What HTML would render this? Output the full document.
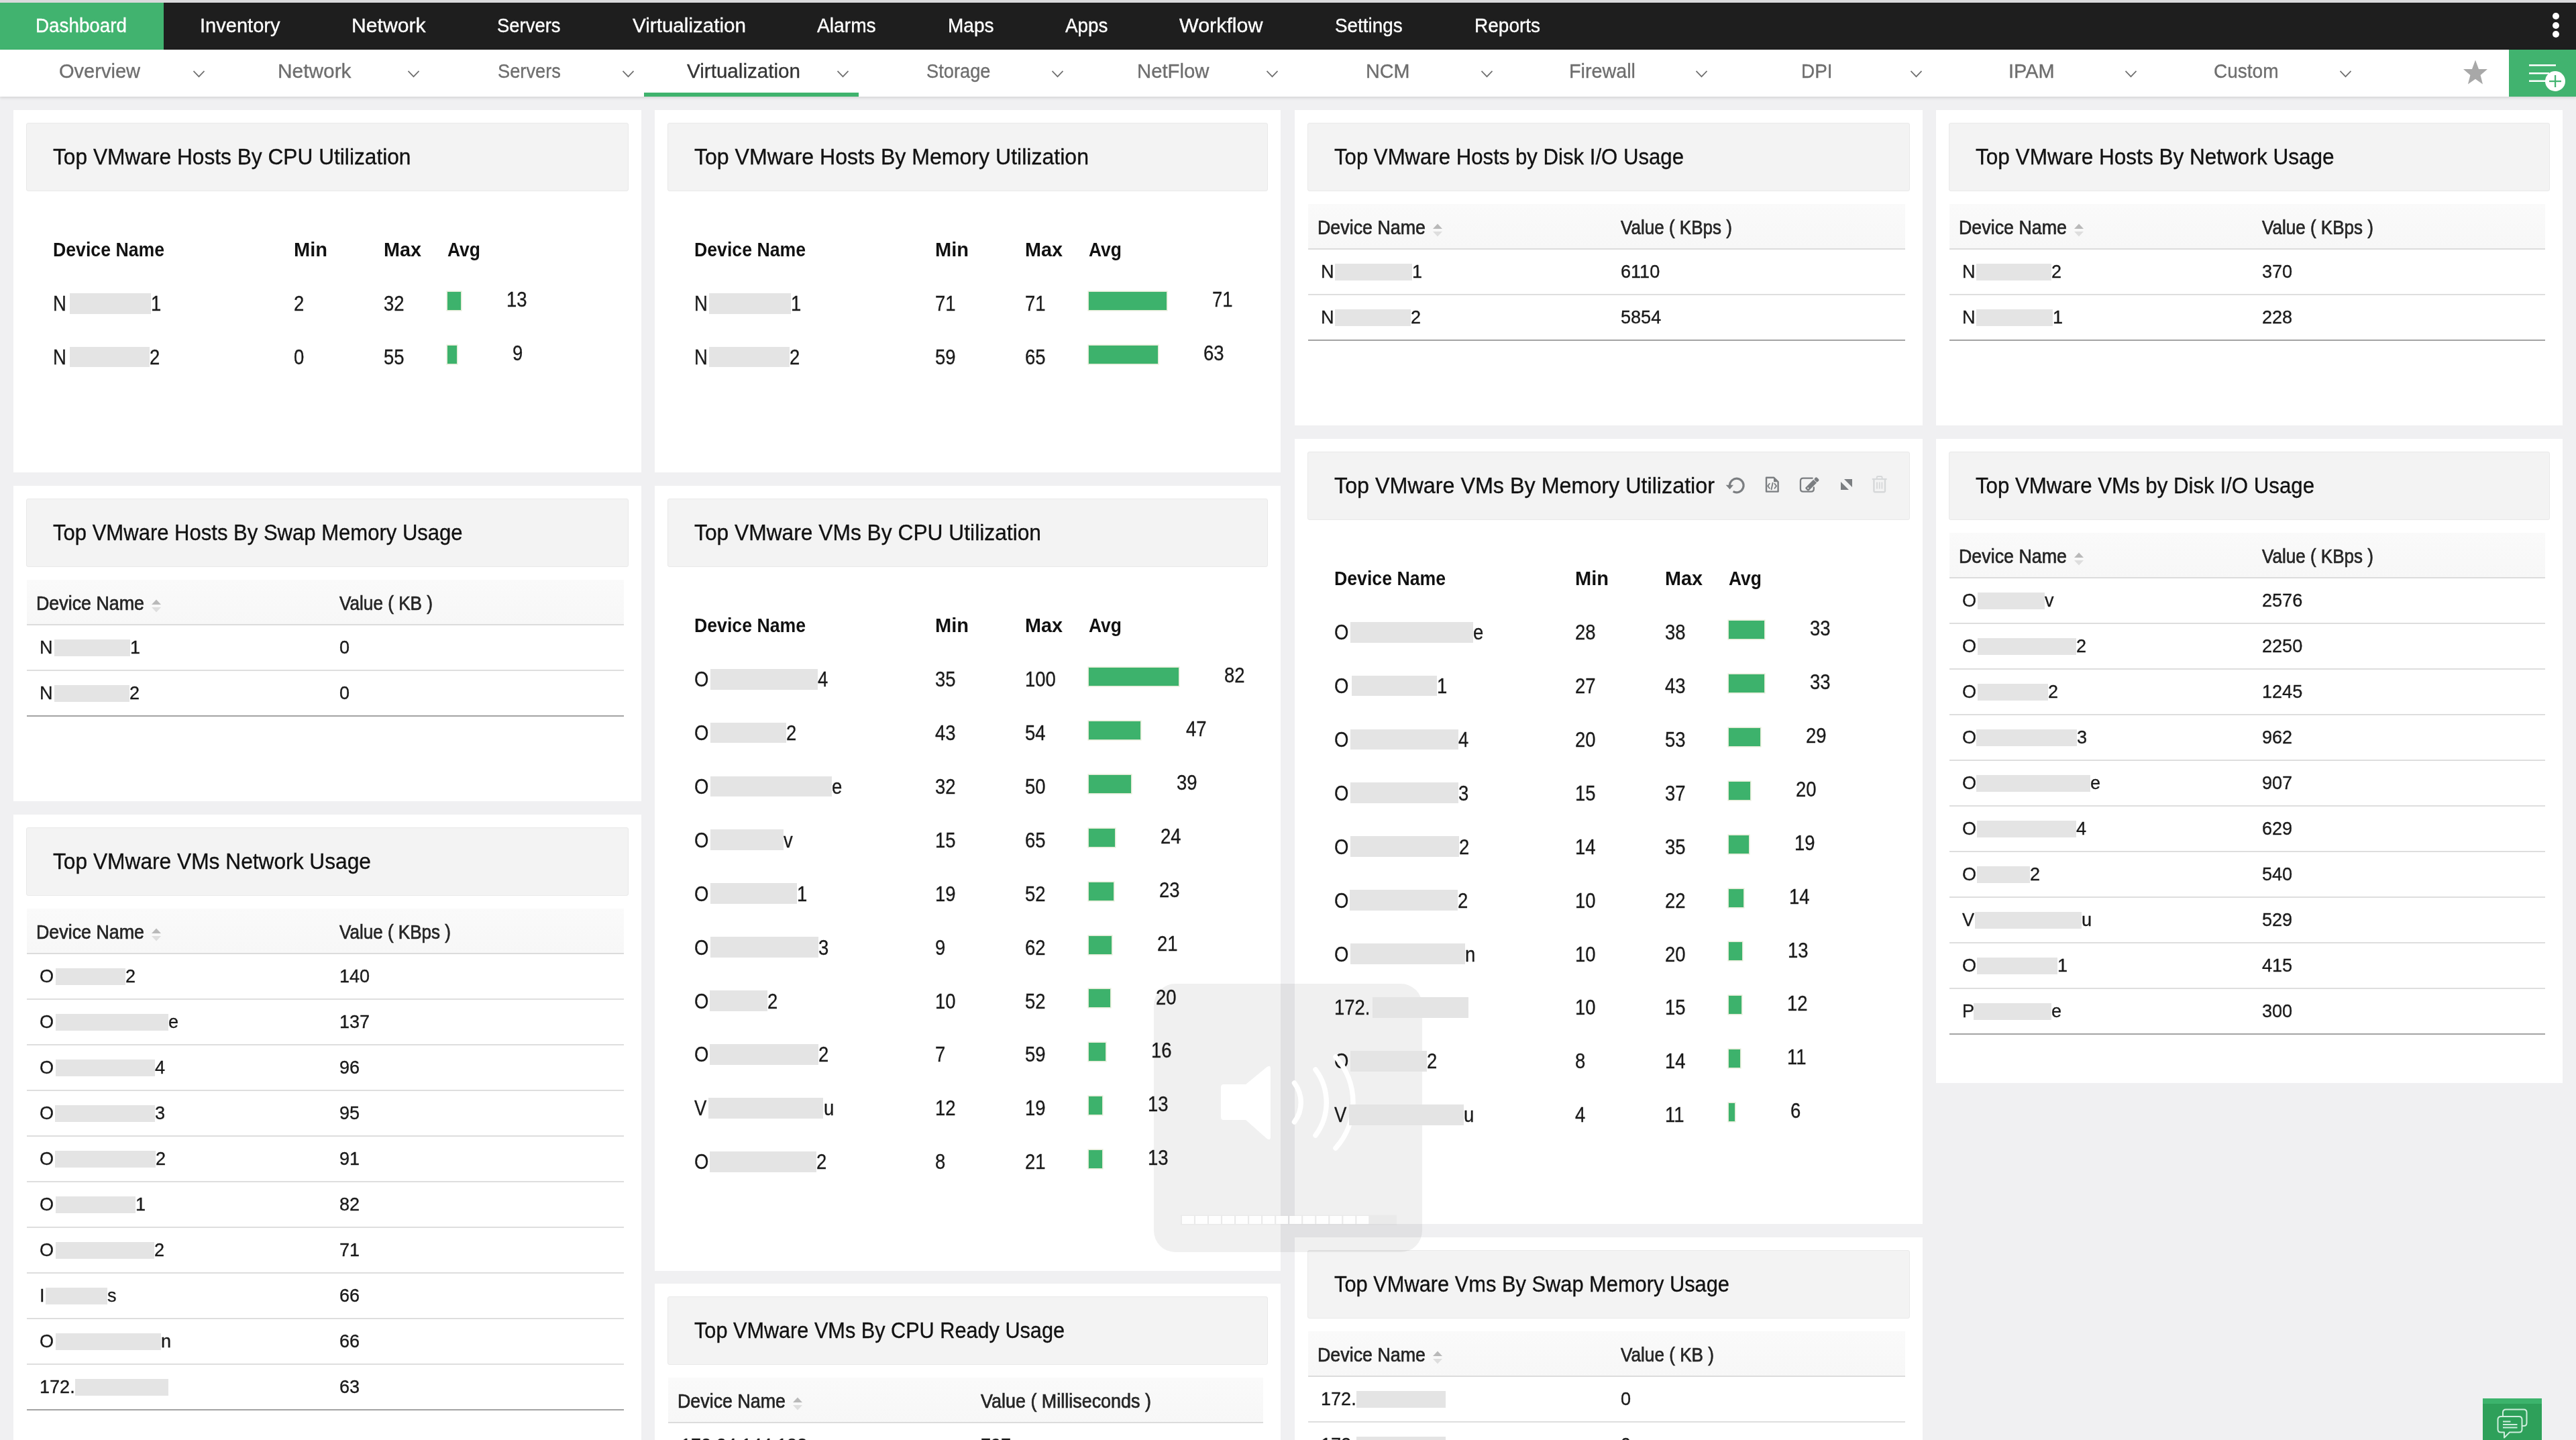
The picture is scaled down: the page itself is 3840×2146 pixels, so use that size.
<!DOCTYPE html>
<html><head><meta charset="utf-8"><title>Dashboard</title>
<style>
html,body{margin:0;padding:0;}
body{width:3840px;height:2146px;overflow:hidden;position:relative;background:#f0f0f2;font-family:'Liberation Sans',sans-serif;}
.t{position:absolute;white-space:nowrap;}
.r{position:absolute;}
</style></head><body>
<div class="r" style="left:0.0px;top:0.0px;width:3840.0px;height:4.0px;background:#dadadc;"></div>
<div class="r" style="left:0.0px;top:4.0px;width:3840.0px;height:70.0px;background:#1e1e1e;"></div>
<div class="r" style="left:0.0px;top:4.0px;width:244.0px;height:70.0px;background:#41b36f;"></div>
<div class="t" style="left:53.2px;top:23.2px;font-size:29.5px;line-height:29.5px;color:#ffffff;font-weight:400;transform:scaleX(0.9424);transform-origin:0 0;-webkit-text-stroke:0.35px #ffffff;">Dashboard</div>
<div class="t" style="left:297.8px;top:23.2px;font-size:29.5px;line-height:29.5px;color:#ffffff;font-weight:400;transform:scaleX(0.9848);transform-origin:0 0;-webkit-text-stroke:0.35px #ffffff;">Inventory</div>
<div class="t" style="left:524.2px;top:23.2px;font-size:29.5px;line-height:29.5px;color:#ffffff;font-weight:400;transform:scaleX(1.0213);transform-origin:0 0;-webkit-text-stroke:0.35px #ffffff;">Network</div>
<div class="t" style="left:741.2px;top:23.2px;font-size:29.5px;line-height:29.5px;color:#ffffff;font-weight:400;transform:scaleX(0.9298);transform-origin:0 0;-webkit-text-stroke:0.35px #ffffff;">Servers</div>
<div class="t" style="left:942.8px;top:23.2px;font-size:29.5px;line-height:29.5px;color:#ffffff;font-weight:400;transform:scaleX(1.0038);transform-origin:0 0;-webkit-text-stroke:0.35px #ffffff;">Virtualization</div>
<div class="t" style="left:1217.8px;top:23.2px;font-size:29.5px;line-height:29.5px;color:#ffffff;font-weight:400;transform:scaleX(0.9555);transform-origin:0 0;-webkit-text-stroke:0.35px #ffffff;">Alarms</div>
<div class="t" style="left:1413.2px;top:23.2px;font-size:29.5px;line-height:29.5px;color:#ffffff;font-weight:400;transform:scaleX(0.9496);transform-origin:0 0;-webkit-text-stroke:0.35px #ffffff;">Maps</div>
<div class="t" style="left:1588.2px;top:23.2px;font-size:29.5px;line-height:29.5px;color:#ffffff;font-weight:400;transform:scaleX(0.9444);transform-origin:0 0;-webkit-text-stroke:0.35px #ffffff;">Apps</div>
<div class="t" style="left:1758.2px;top:23.2px;font-size:29.5px;line-height:29.5px;color:#ffffff;font-weight:400;transform:scaleX(1.0310);transform-origin:0 0;-webkit-text-stroke:0.35px #ffffff;">Workflow</div>
<div class="t" style="left:1989.8px;top:23.2px;font-size:29.5px;line-height:29.5px;color:#ffffff;font-weight:400;transform:scaleX(0.9447);transform-origin:0 0;-webkit-text-stroke:0.35px #ffffff;">Settings</div>
<div class="t" style="left:2198.2px;top:23.2px;font-size:29.5px;line-height:29.5px;color:#ffffff;font-weight:400;transform:scaleX(0.9497);transform-origin:0 0;-webkit-text-stroke:0.35px #ffffff;">Reports</div>
<div class="r" style="left:3805px;top:19.0px;width:10px;height:10px;border-radius:50%;background:#fff"></div>
<div class="r" style="left:3805px;top:32.7px;width:10px;height:10px;border-radius:50%;background:#fff"></div>
<div class="r" style="left:3805px;top:46.0px;width:10px;height:10px;border-radius:50%;background:#fff"></div>
<div class="r" style="left:0.0px;top:74.0px;width:3840.0px;height:70.0px;background:#ffffff;box-shadow:0 2px 4px rgba(0,0,0,0.12);z-index:2"></div>
<div class="t" style="left:88.2px;top:90.9px;font-size:29.5px;line-height:29.5px;color:#6e6e6e;font-weight:400;transform:scaleX(0.9842);transform-origin:0 0;-webkit-text-stroke:0.35px #6e6e6e;z-index:3;">Overview</div>
<svg class="r" style="left:286px;top:103px;z-index:3" width="22" height="14" viewBox="0 0 22 14"><path d="M2.5 2.8 L10.5 11.2 L18.5 2.8" fill="none" stroke="#6f6f6f" stroke-width="1.7"/></svg>
<div class="t" style="left:414.2px;top:90.9px;font-size:29.5px;line-height:29.5px;color:#6e6e6e;font-weight:400;transform:scaleX(1.0121);transform-origin:0 0;-webkit-text-stroke:0.35px #6e6e6e;z-index:3;">Network</div>
<svg class="r" style="left:606px;top:103px;z-index:3" width="22" height="14" viewBox="0 0 22 14"><path d="M2.5 2.8 L10.5 11.2 L18.5 2.8" fill="none" stroke="#6f6f6f" stroke-width="1.7"/></svg>
<div class="t" style="left:741.8px;top:90.9px;font-size:29.5px;line-height:29.5px;color:#6e6e6e;font-weight:400;transform:scaleX(0.9249);transform-origin:0 0;-webkit-text-stroke:0.35px #6e6e6e;z-index:3;">Servers</div>
<svg class="r" style="left:926px;top:103px;z-index:3" width="22" height="14" viewBox="0 0 22 14"><path d="M2.5 2.8 L10.5 11.2 L18.5 2.8" fill="none" stroke="#6f6f6f" stroke-width="1.7"/></svg>
<div class="t" style="left:1024.2px;top:90.9px;font-size:29.5px;line-height:29.5px;color:#353535;font-weight:400;transform:scaleX(1.0038);transform-origin:0 0;-webkit-text-stroke:0.35px #353535;z-index:3;">Virtualization</div>
<svg class="r" style="left:1246px;top:103px;z-index:3" width="22" height="14" viewBox="0 0 22 14"><path d="M2.5 2.8 L10.5 11.2 L18.5 2.8" fill="none" stroke="#6f6f6f" stroke-width="1.7"/></svg>
<div class="t" style="left:1381.0px;top:90.9px;font-size:29.5px;line-height:29.5px;color:#6e6e6e;font-weight:400;transform:scaleX(0.9243);transform-origin:0 0;-webkit-text-stroke:0.35px #6e6e6e;z-index:3;">Storage</div>
<svg class="r" style="left:1566px;top:103px;z-index:3" width="22" height="14" viewBox="0 0 22 14"><path d="M2.5 2.8 L10.5 11.2 L18.5 2.8" fill="none" stroke="#6f6f6f" stroke-width="1.7"/></svg>
<div class="t" style="left:1695.2px;top:90.9px;font-size:29.5px;line-height:29.5px;color:#6e6e6e;font-weight:400;transform:scaleX(0.9936);transform-origin:0 0;-webkit-text-stroke:0.35px #6e6e6e;z-index:3;">NetFlow</div>
<svg class="r" style="left:1886px;top:103px;z-index:3" width="22" height="14" viewBox="0 0 22 14"><path d="M2.5 2.8 L10.5 11.2 L18.5 2.8" fill="none" stroke="#6f6f6f" stroke-width="1.7"/></svg>
<div class="t" style="left:2036.2px;top:90.9px;font-size:29.5px;line-height:29.5px;color:#6e6e6e;font-weight:400;transform:scaleX(0.9750);transform-origin:0 0;-webkit-text-stroke:0.35px #6e6e6e;z-index:3;">NCM</div>
<svg class="r" style="left:2206px;top:103px;z-index:3" width="22" height="14" viewBox="0 0 22 14"><path d="M2.5 2.8 L10.5 11.2 L18.5 2.8" fill="none" stroke="#6f6f6f" stroke-width="1.7"/></svg>
<div class="t" style="left:2339.2px;top:90.9px;font-size:29.5px;line-height:29.5px;color:#6e6e6e;font-weight:400;transform:scaleX(0.9742);transform-origin:0 0;-webkit-text-stroke:0.35px #6e6e6e;z-index:3;">Firewall</div>
<svg class="r" style="left:2526px;top:103px;z-index:3" width="22" height="14" viewBox="0 0 22 14"><path d="M2.5 2.8 L10.5 11.2 L18.5 2.8" fill="none" stroke="#6f6f6f" stroke-width="1.7"/></svg>
<div class="t" style="left:2685.2px;top:90.9px;font-size:29.5px;line-height:29.5px;color:#6e6e6e;font-weight:400;transform:scaleX(0.9456);transform-origin:0 0;-webkit-text-stroke:0.35px #6e6e6e;z-index:3;">DPI</div>
<svg class="r" style="left:2846px;top:103px;z-index:3" width="22" height="14" viewBox="0 0 22 14"><path d="M2.5 2.8 L10.5 11.2 L18.5 2.8" fill="none" stroke="#6f6f6f" stroke-width="1.7"/></svg>
<div class="t" style="left:2994.2px;top:90.9px;font-size:29.5px;line-height:29.5px;color:#6e6e6e;font-weight:400;transform:scaleX(0.9795);transform-origin:0 0;-webkit-text-stroke:0.35px #6e6e6e;z-index:3;">IPAM</div>
<svg class="r" style="left:3166px;top:103px;z-index:3" width="22" height="14" viewBox="0 0 22 14"><path d="M2.5 2.8 L10.5 11.2 L18.5 2.8" fill="none" stroke="#6f6f6f" stroke-width="1.7"/></svg>
<div class="t" style="left:3300.2px;top:90.9px;font-size:29.5px;line-height:29.5px;color:#6e6e6e;font-weight:400;transform:scaleX(0.9495);transform-origin:0 0;-webkit-text-stroke:0.35px #6e6e6e;z-index:3;">Custom</div>
<svg class="r" style="left:3486px;top:103px;z-index:3" width="22" height="14" viewBox="0 0 22 14"><path d="M2.5 2.8 L10.5 11.2 L18.5 2.8" fill="none" stroke="#6f6f6f" stroke-width="1.7"/></svg>
<div class="r" style="left:960.0px;top:138.0px;width:320.0px;height:6.0px;background:#3fb36d;z-index:3"></div>
<svg class="r" style="left:3670px;top:88px;z-index:3" width="40" height="40" viewBox="0 0 40 40"><path d="M20 1.6 L25 15.1 L38 15.1 L27.6 24 L31 37.5 L20 29.7 L8.9 37.5 L12.4 24 L2 15.1 L15 15.1 Z" fill="#a8a8a8"/></svg>
<div class="r" style="left:3740.0px;top:74.0px;width:100.0px;height:70.0px;background:#41b36f;z-index:3"></div>
<svg class="r" style="left:3740px;top:74px;z-index:4" width="100" height="70" viewBox="0 0 100 70"><rect x="30" y="22" width="40" height="2.5" fill="#fff"/><rect x="30" y="34" width="30" height="2.5" fill="#fff"/><rect x="30" y="45.5" width="26" height="2.5" fill="#fff"/><circle cx="69" cy="47" r="15" fill="#fff"/><rect x="68" y="38" width="2.2" height="18" fill="#41b36f"/><rect x="60" y="46" width="18" height="2.2" fill="#41b36f"/></svg>
<div class="r" style="left:20.0px;top:164.0px;width:936.0px;height:540.0px;background:#ffffff;"></div>
<div class="r" style="left:39px;top:183px;width:898px;height:102px;background:#f3f3f3;border-radius:3px;border:1px solid #e9e9e9;box-sizing:border-box"></div>
<div class="t" style="left:79.0px;top:216.9px;font-size:33px;line-height:33px;color:#111111;font-weight:400;transform:scaleX(0.9601);transform-origin:0 0;-webkit-text-stroke:0.35px #111111;">Top VMware Hosts By CPU Utilization</div>
<div class="t" style="left:79.0px;top:356.5px;font-size:30px;line-height:30px;color:#111111;font-weight:700;transform:scaleX(0.8887);transform-origin:0 0;">Device Name</div>
<div class="t" style="left:438.0px;top:356.5px;font-size:30px;line-height:30px;color:#111111;font-weight:700;transform:scaleX(0.9680);transform-origin:0 0;">Min</div>
<div class="t" style="left:572.0px;top:356.5px;font-size:30px;line-height:30px;color:#111111;font-weight:700;transform:scaleX(0.9596);transform-origin:0 0;">Max</div>
<div class="t" style="left:667.0px;top:356.5px;font-size:30px;line-height:30px;color:#111111;font-weight:700;transform:scaleX(0.8818);transform-origin:0 0;">Avg</div>
<div class="t" style="left:79.0px;top:437.1px;font-size:30.5px;line-height:30.5px;color:#1a1a1a;font-weight:400;transform:scaleX(0.9000);transform-origin:0 0;-webkit-text-stroke:0.35px #1a1a1a;">N</div>
<div class="r" style="left:103.5px;top:436.7px;width:121.5px;height:30.9px;background:#e4e4e4;z-index:20"></div>
<div class="t" style="left:225.0px;top:437.1px;font-size:30.5px;line-height:30.5px;color:#1a1a1a;font-weight:400;transform:scaleX(0.9000);transform-origin:0 0;-webkit-text-stroke:0.35px #1a1a1a;">1</div>
<div class="t" style="left:438.0px;top:437.1px;font-size:30.5px;line-height:30.5px;color:#1a1a1a;font-weight:400;transform:scaleX(0.9000);transform-origin:0 0;-webkit-text-stroke:0.35px #1a1a1a;">2</div>
<div class="t" style="left:572.0px;top:437.1px;font-size:30.5px;line-height:30.5px;color:#1a1a1a;font-weight:400;transform:scaleX(0.9000);transform-origin:0 0;-webkit-text-stroke:0.35px #1a1a1a;">32</div>
<div class="r" style="left:667px;top:435.0px;width:20.4px;height:27px;background:#3db26c;box-shadow:0 0 0 1.5px #e3ebd6"></div>
<div class="t" style="left:755.4px;top:431.1px;font-size:30.5px;line-height:30.5px;color:#1a1a1a;font-weight:400;transform:scaleX(0.9000);transform-origin:0 0;-webkit-text-stroke:0.35px #1a1a1a;">13</div>
<div class="t" style="left:79.0px;top:517.0px;font-size:30.5px;line-height:30.5px;color:#1a1a1a;font-weight:400;transform:scaleX(0.9000);transform-origin:0 0;-webkit-text-stroke:0.35px #1a1a1a;">N</div>
<div class="r" style="left:103.5px;top:516.6px;width:119.5px;height:30.9px;background:#e4e4e4;z-index:20"></div>
<div class="t" style="left:223.0px;top:517.0px;font-size:30.5px;line-height:30.5px;color:#1a1a1a;font-weight:400;transform:scaleX(0.9000);transform-origin:0 0;-webkit-text-stroke:0.35px #1a1a1a;">2</div>
<div class="t" style="left:438.0px;top:517.0px;font-size:30.5px;line-height:30.5px;color:#1a1a1a;font-weight:400;transform:scaleX(0.9000);transform-origin:0 0;-webkit-text-stroke:0.35px #1a1a1a;">0</div>
<div class="t" style="left:572.0px;top:517.0px;font-size:30.5px;line-height:30.5px;color:#1a1a1a;font-weight:400;transform:scaleX(0.9000);transform-origin:0 0;-webkit-text-stroke:0.35px #1a1a1a;">55</div>
<div class="r" style="left:667px;top:514.9px;width:13.8px;height:27px;background:#3db26c;box-shadow:0 0 0 1.5px #e3ebd6"></div>
<div class="t" style="left:764.1px;top:511.0px;font-size:30.5px;line-height:30.5px;color:#1a1a1a;font-weight:400;transform:scaleX(0.9000);transform-origin:0 0;-webkit-text-stroke:0.35px #1a1a1a;">9</div>
<div class="r" style="left:20.0px;top:724.0px;width:936.0px;height:470.0px;background:#ffffff;"></div>
<div class="r" style="left:39px;top:743px;width:898px;height:102px;background:#f3f3f3;border-radius:3px;border:1px solid #e9e9e9;box-sizing:border-box"></div>
<div class="t" style="left:79.0px;top:777.0px;font-size:33px;line-height:33px;color:#111111;font-weight:400;transform:scaleX(0.9405);transform-origin:0 0;-webkit-text-stroke:0.35px #111111;">Top VMware Hosts By Swap Memory Usage</div>
<div class="r" style="left:40px;top:864px;width:890px;height:66px;background:linear-gradient(#fafafa,#f7f7f7)"></div>
<div class="r" style="left:40.0px;top:930.0px;width:890.0px;height:2.0px;background:#dcdcdc;"></div>
<div class="t" style="left:54.0px;top:883.9px;font-size:29.5px;line-height:29.5px;color:#242424;font-weight:400;transform:scaleX(0.9093);transform-origin:0 0;-webkit-text-stroke:0.7px #242424;">Device Name</div>
<svg class="r" style="left:225px;top:892px" width="16" height="22" viewBox="0 0 16 22"><path d="M1 9 L8 1.5 L15 9 Z" fill="#b9b9b9"/><path d="M1 13 L8 20.5 L15 13 Z" fill="#dedede"/></svg>
<div class="t" style="left:506.0px;top:883.9px;font-size:29.5px;line-height:29.5px;color:#262626;font-weight:400;transform:scaleX(0.8862);transform-origin:0 0;-webkit-text-stroke:0.7px #262626;">Value ( KB )</div>
<div class="t" style="left:59.0px;top:950.3px;font-size:28.5px;line-height:28.5px;color:#1a1a1a;font-weight:400;transform:scaleX(0.9500);transform-origin:0 0;-webkit-text-stroke:0.35px #1a1a1a;">N</div>
<div class="r" style="left:81.0px;top:952.5px;width:112.6px;height:25.5px;background:#e4e4e4;z-index:20"></div>
<div class="t" style="left:193.6px;top:950.3px;font-size:28.5px;line-height:28.5px;color:#1a1a1a;font-weight:400;transform:scaleX(0.9500);transform-origin:0 0;-webkit-text-stroke:0.35px #1a1a1a;">1</div>
<div class="t" style="left:506.0px;top:950.3px;font-size:28.5px;line-height:28.5px;color:#1a1a1a;font-weight:400;transform:scaleX(0.9500);transform-origin:0 0;-webkit-text-stroke:0.35px #1a1a1a;">0</div>
<div class="r" style="left:40.0px;top:998.0px;width:890.0px;height:2.0px;background:#dedede;"></div>
<div class="t" style="left:59.0px;top:1018.3px;font-size:28.5px;line-height:28.5px;color:#1a1a1a;font-weight:400;transform:scaleX(0.9500);transform-origin:0 0;-webkit-text-stroke:0.35px #1a1a1a;">N</div>
<div class="r" style="left:80.5px;top:1020.5px;width:112.0px;height:25.5px;background:#e4e4e4;z-index:20"></div>
<div class="t" style="left:192.5px;top:1018.3px;font-size:28.5px;line-height:28.5px;color:#1a1a1a;font-weight:400;transform:scaleX(0.9500);transform-origin:0 0;-webkit-text-stroke:0.35px #1a1a1a;">2</div>
<div class="t" style="left:506.0px;top:1018.3px;font-size:28.5px;line-height:28.5px;color:#1a1a1a;font-weight:400;transform:scaleX(0.9500);transform-origin:0 0;-webkit-text-stroke:0.35px #1a1a1a;">0</div>
<div class="r" style="left:40.0px;top:1066.0px;width:890.0px;height:2.0px;background:#a3a3a3;"></div>
<div class="r" style="left:20.0px;top:1214.0px;width:936.0px;height:952.0px;background:#ffffff;"></div>
<div class="r" style="left:39px;top:1233px;width:898px;height:102px;background:#f3f3f3;border-radius:3px;border:1px solid #e9e9e9;box-sizing:border-box"></div>
<div class="t" style="left:79.0px;top:1267.0px;font-size:33px;line-height:33px;color:#111111;font-weight:400;transform:scaleX(0.9608);transform-origin:0 0;-webkit-text-stroke:0.35px #111111;">Top VMware VMs Network Usage</div>
<div class="r" style="left:40px;top:1354px;width:890px;height:66px;background:linear-gradient(#fafafa,#f7f7f7)"></div>
<div class="r" style="left:40.0px;top:1420.0px;width:890.0px;height:2.0px;background:#dcdcdc;"></div>
<div class="t" style="left:54.0px;top:1373.9px;font-size:29.5px;line-height:29.5px;color:#242424;font-weight:400;transform:scaleX(0.9093);transform-origin:0 0;-webkit-text-stroke:0.7px #242424;">Device Name</div>
<svg class="r" style="left:225px;top:1382px" width="16" height="22" viewBox="0 0 16 22"><path d="M1 9 L8 1.5 L15 9 Z" fill="#b9b9b9"/><path d="M1 13 L8 20.5 L15 13 Z" fill="#dedede"/></svg>
<div class="t" style="left:506.0px;top:1373.9px;font-size:29.5px;line-height:29.5px;color:#262626;font-weight:400;transform:scaleX(0.8829);transform-origin:0 0;-webkit-text-stroke:0.7px #262626;">Value ( KBps )</div>
<div class="t" style="left:59.0px;top:1440.3px;font-size:28.5px;line-height:28.5px;color:#1a1a1a;font-weight:400;transform:scaleX(0.9500);transform-origin:0 0;-webkit-text-stroke:0.35px #1a1a1a;">O</div>
<div class="r" style="left:82.8px;top:1442.5px;width:103.8px;height:25.5px;background:#e4e4e4;z-index:20"></div>
<div class="t" style="left:186.6px;top:1440.3px;font-size:28.5px;line-height:28.5px;color:#1a1a1a;font-weight:400;transform:scaleX(0.9500);transform-origin:0 0;-webkit-text-stroke:0.35px #1a1a1a;">2</div>
<div class="t" style="left:506.0px;top:1440.3px;font-size:28.5px;line-height:28.5px;color:#1a1a1a;font-weight:400;transform:scaleX(0.9500);transform-origin:0 0;-webkit-text-stroke:0.35px #1a1a1a;">140</div>
<div class="r" style="left:40.0px;top:1488.0px;width:890.0px;height:2.0px;background:#dedede;"></div>
<div class="t" style="left:59.0px;top:1508.3px;font-size:28.5px;line-height:28.5px;color:#1a1a1a;font-weight:400;transform:scaleX(0.9500);transform-origin:0 0;-webkit-text-stroke:0.35px #1a1a1a;">O</div>
<div class="r" style="left:82.8px;top:1510.5px;width:168.0px;height:25.5px;background:#e4e4e4;z-index:20"></div>
<div class="t" style="left:250.8px;top:1508.3px;font-size:28.5px;line-height:28.5px;color:#1a1a1a;font-weight:400;transform:scaleX(0.9500);transform-origin:0 0;-webkit-text-stroke:0.35px #1a1a1a;">e</div>
<div class="t" style="left:506.0px;top:1508.3px;font-size:28.5px;line-height:28.5px;color:#1a1a1a;font-weight:400;transform:scaleX(0.9500);transform-origin:0 0;-webkit-text-stroke:0.35px #1a1a1a;">137</div>
<div class="r" style="left:40.0px;top:1556.0px;width:890.0px;height:2.0px;background:#dedede;"></div>
<div class="t" style="left:59.0px;top:1576.3px;font-size:28.5px;line-height:28.5px;color:#1a1a1a;font-weight:400;transform:scaleX(0.9500);transform-origin:0 0;-webkit-text-stroke:0.35px #1a1a1a;">O</div>
<div class="r" style="left:82.8px;top:1578.5px;width:147.8px;height:25.5px;background:#e4e4e4;z-index:20"></div>
<div class="t" style="left:230.6px;top:1576.3px;font-size:28.5px;line-height:28.5px;color:#1a1a1a;font-weight:400;transform:scaleX(0.9500);transform-origin:0 0;-webkit-text-stroke:0.35px #1a1a1a;">4</div>
<div class="t" style="left:506.0px;top:1576.3px;font-size:28.5px;line-height:28.5px;color:#1a1a1a;font-weight:400;transform:scaleX(0.9500);transform-origin:0 0;-webkit-text-stroke:0.35px #1a1a1a;">96</div>
<div class="r" style="left:40.0px;top:1624.0px;width:890.0px;height:2.0px;background:#dedede;"></div>
<div class="t" style="left:59.0px;top:1644.3px;font-size:28.5px;line-height:28.5px;color:#1a1a1a;font-weight:400;transform:scaleX(0.9500);transform-origin:0 0;-webkit-text-stroke:0.35px #1a1a1a;">O</div>
<div class="r" style="left:81.6px;top:1646.5px;width:149.7px;height:25.5px;background:#e4e4e4;z-index:20"></div>
<div class="t" style="left:231.3px;top:1644.3px;font-size:28.5px;line-height:28.5px;color:#1a1a1a;font-weight:400;transform:scaleX(0.9500);transform-origin:0 0;-webkit-text-stroke:0.35px #1a1a1a;">3</div>
<div class="t" style="left:506.0px;top:1644.3px;font-size:28.5px;line-height:28.5px;color:#1a1a1a;font-weight:400;transform:scaleX(0.9500);transform-origin:0 0;-webkit-text-stroke:0.35px #1a1a1a;">95</div>
<div class="r" style="left:40.0px;top:1692.0px;width:890.0px;height:2.0px;background:#dedede;"></div>
<div class="t" style="left:59.0px;top:1712.3px;font-size:28.5px;line-height:28.5px;color:#1a1a1a;font-weight:400;transform:scaleX(0.9500);transform-origin:0 0;-webkit-text-stroke:0.35px #1a1a1a;">O</div>
<div class="r" style="left:82.0px;top:1714.5px;width:149.8px;height:25.5px;background:#e4e4e4;z-index:20"></div>
<div class="t" style="left:231.8px;top:1712.3px;font-size:28.5px;line-height:28.5px;color:#1a1a1a;font-weight:400;transform:scaleX(0.9500);transform-origin:0 0;-webkit-text-stroke:0.35px #1a1a1a;">2</div>
<div class="t" style="left:506.0px;top:1712.3px;font-size:28.5px;line-height:28.5px;color:#1a1a1a;font-weight:400;transform:scaleX(0.9500);transform-origin:0 0;-webkit-text-stroke:0.35px #1a1a1a;">91</div>
<div class="r" style="left:40.0px;top:1760.0px;width:890.0px;height:2.0px;background:#dedede;"></div>
<div class="t" style="left:59.0px;top:1780.3px;font-size:28.5px;line-height:28.5px;color:#1a1a1a;font-weight:400;transform:scaleX(0.9500);transform-origin:0 0;-webkit-text-stroke:0.35px #1a1a1a;">O</div>
<div class="r" style="left:82.7px;top:1782.5px;width:119.3px;height:25.5px;background:#e4e4e4;z-index:20"></div>
<div class="t" style="left:202.0px;top:1780.3px;font-size:28.5px;line-height:28.5px;color:#1a1a1a;font-weight:400;transform:scaleX(0.9500);transform-origin:0 0;-webkit-text-stroke:0.35px #1a1a1a;">1</div>
<div class="t" style="left:506.0px;top:1780.3px;font-size:28.5px;line-height:28.5px;color:#1a1a1a;font-weight:400;transform:scaleX(0.9500);transform-origin:0 0;-webkit-text-stroke:0.35px #1a1a1a;">82</div>
<div class="r" style="left:40.0px;top:1828.0px;width:890.0px;height:2.0px;background:#dedede;"></div>
<div class="t" style="left:59.0px;top:1848.3px;font-size:28.5px;line-height:28.5px;color:#1a1a1a;font-weight:400;transform:scaleX(0.9500);transform-origin:0 0;-webkit-text-stroke:0.35px #1a1a1a;">O</div>
<div class="r" style="left:82.7px;top:1850.5px;width:147.3px;height:25.5px;background:#e4e4e4;z-index:20"></div>
<div class="t" style="left:230.0px;top:1848.3px;font-size:28.5px;line-height:28.5px;color:#1a1a1a;font-weight:400;transform:scaleX(0.9500);transform-origin:0 0;-webkit-text-stroke:0.35px #1a1a1a;">2</div>
<div class="t" style="left:506.0px;top:1848.3px;font-size:28.5px;line-height:28.5px;color:#1a1a1a;font-weight:400;transform:scaleX(0.9500);transform-origin:0 0;-webkit-text-stroke:0.35px #1a1a1a;">71</div>
<div class="r" style="left:40.0px;top:1896.0px;width:890.0px;height:2.0px;background:#dedede;"></div>
<div class="t" style="left:59.0px;top:1916.3px;font-size:28.5px;line-height:28.5px;color:#1a1a1a;font-weight:400;transform:scaleX(0.9500);transform-origin:0 0;-webkit-text-stroke:0.35px #1a1a1a;">I</div>
<div class="r" style="left:68.0px;top:1918.5px;width:92.0px;height:25.5px;background:#e4e4e4;z-index:20"></div>
<div class="t" style="left:160.0px;top:1916.3px;font-size:28.5px;line-height:28.5px;color:#1a1a1a;font-weight:400;transform:scaleX(0.9500);transform-origin:0 0;-webkit-text-stroke:0.35px #1a1a1a;">s</div>
<div class="t" style="left:506.0px;top:1916.3px;font-size:28.5px;line-height:28.5px;color:#1a1a1a;font-weight:400;transform:scaleX(0.9500);transform-origin:0 0;-webkit-text-stroke:0.35px #1a1a1a;">66</div>
<div class="r" style="left:40.0px;top:1964.0px;width:890.0px;height:2.0px;background:#dedede;"></div>
<div class="t" style="left:59.0px;top:1984.3px;font-size:28.5px;line-height:28.5px;color:#1a1a1a;font-weight:400;transform:scaleX(0.9500);transform-origin:0 0;-webkit-text-stroke:0.35px #1a1a1a;">O</div>
<div class="r" style="left:82.7px;top:1986.5px;width:156.9px;height:25.5px;background:#e4e4e4;z-index:20"></div>
<div class="t" style="left:239.6px;top:1984.3px;font-size:28.5px;line-height:28.5px;color:#1a1a1a;font-weight:400;transform:scaleX(0.9500);transform-origin:0 0;-webkit-text-stroke:0.35px #1a1a1a;">n</div>
<div class="t" style="left:506.0px;top:1984.3px;font-size:28.5px;line-height:28.5px;color:#1a1a1a;font-weight:400;transform:scaleX(0.9500);transform-origin:0 0;-webkit-text-stroke:0.35px #1a1a1a;">66</div>
<div class="r" style="left:40.0px;top:2032.0px;width:890.0px;height:2.0px;background:#dedede;"></div>
<div class="t" style="left:59.0px;top:2052.3px;font-size:28.5px;line-height:28.5px;color:#1a1a1a;font-weight:400;transform:scaleX(0.9500);transform-origin:0 0;-webkit-text-stroke:0.35px #1a1a1a;">172.</div>
<div class="r" style="left:111.8px;top:2054.5px;width:139.0px;height:25.5px;background:#e4e4e4;z-index:20"></div>
<div class="t" style="left:506.0px;top:2052.3px;font-size:28.5px;line-height:28.5px;color:#1a1a1a;font-weight:400;transform:scaleX(0.9500);transform-origin:0 0;-webkit-text-stroke:0.35px #1a1a1a;">63</div>
<div class="r" style="left:40.0px;top:2100.0px;width:890.0px;height:2.0px;background:#a3a3a3;"></div>
<div class="r" style="left:976.0px;top:164.0px;width:933.0px;height:540.0px;background:#ffffff;"></div>
<div class="r" style="left:995px;top:183px;width:895px;height:102px;background:#f3f3f3;border-radius:3px;border:1px solid #e9e9e9;box-sizing:border-box"></div>
<div class="t" style="left:1035.0px;top:216.9px;font-size:33px;line-height:33px;color:#111111;font-weight:400;transform:scaleX(0.9716);transform-origin:0 0;-webkit-text-stroke:0.35px #111111;">Top VMware Hosts By Memory Utilization</div>
<div class="t" style="left:1035.0px;top:356.5px;font-size:30px;line-height:30px;color:#111111;font-weight:700;transform:scaleX(0.8887);transform-origin:0 0;">Device Name</div>
<div class="t" style="left:1394.0px;top:356.5px;font-size:30px;line-height:30px;color:#111111;font-weight:700;transform:scaleX(0.9680);transform-origin:0 0;">Min</div>
<div class="t" style="left:1528.0px;top:356.5px;font-size:30px;line-height:30px;color:#111111;font-weight:700;transform:scaleX(0.9596);transform-origin:0 0;">Max</div>
<div class="t" style="left:1623.0px;top:356.5px;font-size:30px;line-height:30px;color:#111111;font-weight:700;transform:scaleX(0.8818);transform-origin:0 0;">Avg</div>
<div class="t" style="left:1035.0px;top:437.1px;font-size:30.5px;line-height:30.5px;color:#1a1a1a;font-weight:400;transform:scaleX(0.9000);transform-origin:0 0;-webkit-text-stroke:0.35px #1a1a1a;">N</div>
<div class="r" style="left:1056.5px;top:436.7px;width:122.1px;height:30.9px;background:#e4e4e4;z-index:20"></div>
<div class="t" style="left:1178.6px;top:437.1px;font-size:30.5px;line-height:30.5px;color:#1a1a1a;font-weight:400;transform:scaleX(0.9000);transform-origin:0 0;-webkit-text-stroke:0.35px #1a1a1a;">1</div>
<div class="t" style="left:1394.0px;top:437.1px;font-size:30.5px;line-height:30.5px;color:#1a1a1a;font-weight:400;transform:scaleX(0.9000);transform-origin:0 0;-webkit-text-stroke:0.35px #1a1a1a;">71</div>
<div class="t" style="left:1528.0px;top:437.1px;font-size:30.5px;line-height:30.5px;color:#1a1a1a;font-weight:400;transform:scaleX(0.9000);transform-origin:0 0;-webkit-text-stroke:0.35px #1a1a1a;">71</div>
<div class="r" style="left:1623px;top:435.0px;width:116.1px;height:27px;background:#3db26c;box-shadow:0 0 0 1.5px #e3ebd6"></div>
<div class="t" style="left:1807.1px;top:431.1px;font-size:30.5px;line-height:30.5px;color:#1a1a1a;font-weight:400;transform:scaleX(0.9000);transform-origin:0 0;-webkit-text-stroke:0.35px #1a1a1a;">71</div>
<div class="t" style="left:1035.0px;top:517.0px;font-size:30.5px;line-height:30.5px;color:#1a1a1a;font-weight:400;transform:scaleX(0.9000);transform-origin:0 0;-webkit-text-stroke:0.35px #1a1a1a;">N</div>
<div class="r" style="left:1056.5px;top:516.6px;width:120.5px;height:30.9px;background:#e4e4e4;z-index:20"></div>
<div class="t" style="left:1177.0px;top:517.0px;font-size:30.5px;line-height:30.5px;color:#1a1a1a;font-weight:400;transform:scaleX(0.9000);transform-origin:0 0;-webkit-text-stroke:0.35px #1a1a1a;">2</div>
<div class="t" style="left:1394.0px;top:517.0px;font-size:30.5px;line-height:30.5px;color:#1a1a1a;font-weight:400;transform:scaleX(0.9000);transform-origin:0 0;-webkit-text-stroke:0.35px #1a1a1a;">59</div>
<div class="t" style="left:1528.0px;top:517.0px;font-size:30.5px;line-height:30.5px;color:#1a1a1a;font-weight:400;transform:scaleX(0.9000);transform-origin:0 0;-webkit-text-stroke:0.35px #1a1a1a;">65</div>
<div class="r" style="left:1623px;top:514.9px;width:102.9px;height:27px;background:#3db26c;box-shadow:0 0 0 1.5px #e3ebd6"></div>
<div class="t" style="left:1793.9px;top:511.0px;font-size:30.5px;line-height:30.5px;color:#1a1a1a;font-weight:400;transform:scaleX(0.9000);transform-origin:0 0;-webkit-text-stroke:0.35px #1a1a1a;">63</div>
<div class="r" style="left:976.0px;top:724.0px;width:933.0px;height:1170.0px;background:#ffffff;"></div>
<div class="r" style="left:995px;top:743px;width:895px;height:102px;background:#f3f3f3;border-radius:3px;border:1px solid #e9e9e9;box-sizing:border-box"></div>
<div class="t" style="left:1035.0px;top:777.0px;font-size:33px;line-height:33px;color:#111111;font-weight:400;transform:scaleX(0.9622);transform-origin:0 0;-webkit-text-stroke:0.35px #111111;">Top VMware VMs By CPU Utilization</div>
<div class="t" style="left:1035.0px;top:916.5px;font-size:30px;line-height:30px;color:#111111;font-weight:700;transform:scaleX(0.8887);transform-origin:0 0;">Device Name</div>
<div class="t" style="left:1394.0px;top:916.5px;font-size:30px;line-height:30px;color:#111111;font-weight:700;transform:scaleX(0.9680);transform-origin:0 0;">Min</div>
<div class="t" style="left:1528.0px;top:916.5px;font-size:30px;line-height:30px;color:#111111;font-weight:700;transform:scaleX(0.9596);transform-origin:0 0;">Max</div>
<div class="t" style="left:1623.0px;top:916.5px;font-size:30px;line-height:30px;color:#111111;font-weight:700;transform:scaleX(0.8818);transform-origin:0 0;">Avg</div>
<div class="t" style="left:1035.0px;top:997.1px;font-size:30.5px;line-height:30.5px;color:#1a1a1a;font-weight:400;transform:scaleX(0.9000);transform-origin:0 0;-webkit-text-stroke:0.35px #1a1a1a;">O</div>
<div class="r" style="left:1059.0px;top:996.7px;width:159.5px;height:30.9px;background:#e4e4e4;z-index:20"></div>
<div class="t" style="left:1218.5px;top:997.1px;font-size:30.5px;line-height:30.5px;color:#1a1a1a;font-weight:400;transform:scaleX(0.9000);transform-origin:0 0;-webkit-text-stroke:0.35px #1a1a1a;">4</div>
<div class="t" style="left:1394.0px;top:997.1px;font-size:30.5px;line-height:30.5px;color:#1a1a1a;font-weight:400;transform:scaleX(0.9000);transform-origin:0 0;-webkit-text-stroke:0.35px #1a1a1a;">35</div>
<div class="t" style="left:1528.0px;top:997.1px;font-size:30.5px;line-height:30.5px;color:#1a1a1a;font-weight:400;transform:scaleX(0.9000);transform-origin:0 0;-webkit-text-stroke:0.35px #1a1a1a;">100</div>
<div class="r" style="left:1623px;top:995.0px;width:134.3px;height:27px;background:#3db26c;box-shadow:0 0 0 1.5px #e3ebd6"></div>
<div class="t" style="left:1825.3px;top:991.1px;font-size:30.5px;line-height:30.5px;color:#1a1a1a;font-weight:400;transform:scaleX(0.9000);transform-origin:0 0;-webkit-text-stroke:0.35px #1a1a1a;">82</div>
<div class="t" style="left:1035.0px;top:1077.0px;font-size:30.5px;line-height:30.5px;color:#1a1a1a;font-weight:400;transform:scaleX(0.9000);transform-origin:0 0;-webkit-text-stroke:0.35px #1a1a1a;">O</div>
<div class="r" style="left:1059.0px;top:1076.6px;width:113.0px;height:30.9px;background:#e4e4e4;z-index:20"></div>
<div class="t" style="left:1172.0px;top:1077.0px;font-size:30.5px;line-height:30.5px;color:#1a1a1a;font-weight:400;transform:scaleX(0.9000);transform-origin:0 0;-webkit-text-stroke:0.35px #1a1a1a;">2</div>
<div class="t" style="left:1394.0px;top:1077.0px;font-size:30.5px;line-height:30.5px;color:#1a1a1a;font-weight:400;transform:scaleX(0.9000);transform-origin:0 0;-webkit-text-stroke:0.35px #1a1a1a;">43</div>
<div class="t" style="left:1528.0px;top:1077.0px;font-size:30.5px;line-height:30.5px;color:#1a1a1a;font-weight:400;transform:scaleX(0.9000);transform-origin:0 0;-webkit-text-stroke:0.35px #1a1a1a;">54</div>
<div class="r" style="left:1623px;top:1074.9px;width:76.5px;height:27px;background:#3db26c;box-shadow:0 0 0 1.5px #e3ebd6"></div>
<div class="t" style="left:1767.5px;top:1071.0px;font-size:30.5px;line-height:30.5px;color:#1a1a1a;font-weight:400;transform:scaleX(0.9000);transform-origin:0 0;-webkit-text-stroke:0.35px #1a1a1a;">47</div>
<div class="t" style="left:1035.0px;top:1156.9px;font-size:30.5px;line-height:30.5px;color:#1a1a1a;font-weight:400;transform:scaleX(0.9000);transform-origin:0 0;-webkit-text-stroke:0.35px #1a1a1a;">O</div>
<div class="r" style="left:1059.0px;top:1156.5px;width:181.0px;height:30.9px;background:#e4e4e4;z-index:20"></div>
<div class="t" style="left:1240.0px;top:1156.9px;font-size:30.5px;line-height:30.5px;color:#1a1a1a;font-weight:400;transform:scaleX(0.9000);transform-origin:0 0;-webkit-text-stroke:0.35px #1a1a1a;">e</div>
<div class="t" style="left:1394.0px;top:1156.9px;font-size:30.5px;line-height:30.5px;color:#1a1a1a;font-weight:400;transform:scaleX(0.9000);transform-origin:0 0;-webkit-text-stroke:0.35px #1a1a1a;">32</div>
<div class="t" style="left:1528.0px;top:1156.9px;font-size:30.5px;line-height:30.5px;color:#1a1a1a;font-weight:400;transform:scaleX(0.9000);transform-origin:0 0;-webkit-text-stroke:0.35px #1a1a1a;">50</div>
<div class="r" style="left:1623px;top:1154.8px;width:63.3px;height:27px;background:#3db26c;box-shadow:0 0 0 1.5px #e3ebd6"></div>
<div class="t" style="left:1754.3px;top:1150.9px;font-size:30.5px;line-height:30.5px;color:#1a1a1a;font-weight:400;transform:scaleX(0.9000);transform-origin:0 0;-webkit-text-stroke:0.35px #1a1a1a;">39</div>
<div class="t" style="left:1035.0px;top:1236.8px;font-size:30.5px;line-height:30.5px;color:#1a1a1a;font-weight:400;transform:scaleX(0.9000);transform-origin:0 0;-webkit-text-stroke:0.35px #1a1a1a;">O</div>
<div class="r" style="left:1059.0px;top:1236.4px;width:109.0px;height:30.9px;background:#e4e4e4;z-index:20"></div>
<div class="t" style="left:1168.0px;top:1236.8px;font-size:30.5px;line-height:30.5px;color:#1a1a1a;font-weight:400;transform:scaleX(0.9000);transform-origin:0 0;-webkit-text-stroke:0.35px #1a1a1a;">v</div>
<div class="t" style="left:1394.0px;top:1236.8px;font-size:30.5px;line-height:30.5px;color:#1a1a1a;font-weight:400;transform:scaleX(0.9000);transform-origin:0 0;-webkit-text-stroke:0.35px #1a1a1a;">15</div>
<div class="t" style="left:1528.0px;top:1236.8px;font-size:30.5px;line-height:30.5px;color:#1a1a1a;font-weight:400;transform:scaleX(0.9000);transform-origin:0 0;-webkit-text-stroke:0.35px #1a1a1a;">65</div>
<div class="r" style="left:1623px;top:1234.7px;width:38.6px;height:27px;background:#3db26c;box-shadow:0 0 0 1.5px #e3ebd6"></div>
<div class="t" style="left:1729.6px;top:1230.8px;font-size:30.5px;line-height:30.5px;color:#1a1a1a;font-weight:400;transform:scaleX(0.9000);transform-origin:0 0;-webkit-text-stroke:0.35px #1a1a1a;">24</div>
<div class="t" style="left:1035.0px;top:1316.7px;font-size:30.5px;line-height:30.5px;color:#1a1a1a;font-weight:400;transform:scaleX(0.9000);transform-origin:0 0;-webkit-text-stroke:0.35px #1a1a1a;">O</div>
<div class="r" style="left:1059.0px;top:1316.3px;width:128.5px;height:30.9px;background:#e4e4e4;z-index:20"></div>
<div class="t" style="left:1187.5px;top:1316.7px;font-size:30.5px;line-height:30.5px;color:#1a1a1a;font-weight:400;transform:scaleX(0.9000);transform-origin:0 0;-webkit-text-stroke:0.35px #1a1a1a;">1</div>
<div class="t" style="left:1394.0px;top:1316.7px;font-size:30.5px;line-height:30.5px;color:#1a1a1a;font-weight:400;transform:scaleX(0.9000);transform-origin:0 0;-webkit-text-stroke:0.35px #1a1a1a;">19</div>
<div class="t" style="left:1528.0px;top:1316.7px;font-size:30.5px;line-height:30.5px;color:#1a1a1a;font-weight:400;transform:scaleX(0.9000);transform-origin:0 0;-webkit-text-stroke:0.35px #1a1a1a;">52</div>
<div class="r" style="left:1623px;top:1314.6px;width:36.9px;height:27px;background:#3db26c;box-shadow:0 0 0 1.5px #e3ebd6"></div>
<div class="t" style="left:1727.9px;top:1310.7px;font-size:30.5px;line-height:30.5px;color:#1a1a1a;font-weight:400;transform:scaleX(0.9000);transform-origin:0 0;-webkit-text-stroke:0.35px #1a1a1a;">23</div>
<div class="t" style="left:1035.0px;top:1396.6px;font-size:30.5px;line-height:30.5px;color:#1a1a1a;font-weight:400;transform:scaleX(0.9000);transform-origin:0 0;-webkit-text-stroke:0.35px #1a1a1a;">O</div>
<div class="r" style="left:1059.0px;top:1396.2px;width:160.7px;height:30.9px;background:#e4e4e4;z-index:20"></div>
<div class="t" style="left:1219.7px;top:1396.6px;font-size:30.5px;line-height:30.5px;color:#1a1a1a;font-weight:400;transform:scaleX(0.9000);transform-origin:0 0;-webkit-text-stroke:0.35px #1a1a1a;">3</div>
<div class="t" style="left:1394.0px;top:1396.6px;font-size:30.5px;line-height:30.5px;color:#1a1a1a;font-weight:400;transform:scaleX(0.9000);transform-origin:0 0;-webkit-text-stroke:0.35px #1a1a1a;">9</div>
<div class="t" style="left:1528.0px;top:1396.6px;font-size:30.5px;line-height:30.5px;color:#1a1a1a;font-weight:400;transform:scaleX(0.9000);transform-origin:0 0;-webkit-text-stroke:0.35px #1a1a1a;">62</div>
<div class="r" style="left:1623px;top:1394.5px;width:33.6px;height:27px;background:#3db26c;box-shadow:0 0 0 1.5px #e3ebd6"></div>
<div class="t" style="left:1724.6px;top:1390.6px;font-size:30.5px;line-height:30.5px;color:#1a1a1a;font-weight:400;transform:scaleX(0.9000);transform-origin:0 0;-webkit-text-stroke:0.35px #1a1a1a;">21</div>
<div class="t" style="left:1035.0px;top:1476.5px;font-size:30.5px;line-height:30.5px;color:#1a1a1a;font-weight:400;transform:scaleX(0.9000);transform-origin:0 0;-webkit-text-stroke:0.35px #1a1a1a;">O</div>
<div class="r" style="left:1058.0px;top:1476.1px;width:85.5px;height:30.9px;background:#e4e4e4;z-index:20"></div>
<div class="t" style="left:1143.5px;top:1476.5px;font-size:30.5px;line-height:30.5px;color:#1a1a1a;font-weight:400;transform:scaleX(0.9000);transform-origin:0 0;-webkit-text-stroke:0.35px #1a1a1a;">2</div>
<div class="t" style="left:1394.0px;top:1476.5px;font-size:30.5px;line-height:30.5px;color:#1a1a1a;font-weight:400;transform:scaleX(0.9000);transform-origin:0 0;-webkit-text-stroke:0.35px #1a1a1a;">10</div>
<div class="t" style="left:1528.0px;top:1476.5px;font-size:30.5px;line-height:30.5px;color:#1a1a1a;font-weight:400;transform:scaleX(0.9000);transform-origin:0 0;-webkit-text-stroke:0.35px #1a1a1a;">52</div>
<div class="r" style="left:1623px;top:1474.4px;width:32.0px;height:27px;background:#3db26c;box-shadow:0 0 0 1.5px #e3ebd6"></div>
<div class="t" style="left:1723.0px;top:1470.5px;font-size:30.5px;line-height:30.5px;color:#1a1a1a;font-weight:400;transform:scaleX(0.9000);transform-origin:0 0;-webkit-text-stroke:0.35px #1a1a1a;">20</div>
<div class="t" style="left:1035.0px;top:1556.4px;font-size:30.5px;line-height:30.5px;color:#1a1a1a;font-weight:400;transform:scaleX(0.9000);transform-origin:0 0;-webkit-text-stroke:0.35px #1a1a1a;">O</div>
<div class="r" style="left:1058.0px;top:1556.0px;width:161.7px;height:30.9px;background:#e4e4e4;z-index:20"></div>
<div class="t" style="left:1219.7px;top:1556.4px;font-size:30.5px;line-height:30.5px;color:#1a1a1a;font-weight:400;transform:scaleX(0.9000);transform-origin:0 0;-webkit-text-stroke:0.35px #1a1a1a;">2</div>
<div class="t" style="left:1394.0px;top:1556.4px;font-size:30.5px;line-height:30.5px;color:#1a1a1a;font-weight:400;transform:scaleX(0.9000);transform-origin:0 0;-webkit-text-stroke:0.35px #1a1a1a;">7</div>
<div class="t" style="left:1528.0px;top:1556.4px;font-size:30.5px;line-height:30.5px;color:#1a1a1a;font-weight:400;transform:scaleX(0.9000);transform-origin:0 0;-webkit-text-stroke:0.35px #1a1a1a;">59</div>
<div class="r" style="left:1623px;top:1554.3px;width:25.4px;height:27px;background:#3db26c;box-shadow:0 0 0 1.5px #e3ebd6"></div>
<div class="t" style="left:1716.4px;top:1550.4px;font-size:30.5px;line-height:30.5px;color:#1a1a1a;font-weight:400;transform:scaleX(0.9000);transform-origin:0 0;-webkit-text-stroke:0.35px #1a1a1a;">16</div>
<div class="t" style="left:1035.0px;top:1636.3px;font-size:30.5px;line-height:30.5px;color:#1a1a1a;font-weight:400;transform:scaleX(0.9000);transform-origin:0 0;-webkit-text-stroke:0.35px #1a1a1a;">V</div>
<div class="r" style="left:1056.4px;top:1635.9px;width:171.1px;height:30.9px;background:#e4e4e4;z-index:20"></div>
<div class="t" style="left:1227.5px;top:1636.3px;font-size:30.5px;line-height:30.5px;color:#1a1a1a;font-weight:400;transform:scaleX(0.9000);transform-origin:0 0;-webkit-text-stroke:0.35px #1a1a1a;">u</div>
<div class="t" style="left:1394.0px;top:1636.3px;font-size:30.5px;line-height:30.5px;color:#1a1a1a;font-weight:400;transform:scaleX(0.9000);transform-origin:0 0;-webkit-text-stroke:0.35px #1a1a1a;">12</div>
<div class="t" style="left:1528.0px;top:1636.3px;font-size:30.5px;line-height:30.5px;color:#1a1a1a;font-weight:400;transform:scaleX(0.9000);transform-origin:0 0;-webkit-text-stroke:0.35px #1a1a1a;">19</div>
<div class="r" style="left:1623px;top:1634.2px;width:20.4px;height:27px;background:#3db26c;box-shadow:0 0 0 1.5px #e3ebd6"></div>
<div class="t" style="left:1711.4px;top:1630.3px;font-size:30.5px;line-height:30.5px;color:#1a1a1a;font-weight:400;transform:scaleX(0.9000);transform-origin:0 0;-webkit-text-stroke:0.35px #1a1a1a;">13</div>
<div class="t" style="left:1035.0px;top:1716.2px;font-size:30.5px;line-height:30.5px;color:#1a1a1a;font-weight:400;transform:scaleX(0.9000);transform-origin:0 0;-webkit-text-stroke:0.35px #1a1a1a;">O</div>
<div class="r" style="left:1058.0px;top:1715.8px;width:159.0px;height:30.9px;background:#e4e4e4;z-index:20"></div>
<div class="t" style="left:1217.0px;top:1716.2px;font-size:30.5px;line-height:30.5px;color:#1a1a1a;font-weight:400;transform:scaleX(0.9000);transform-origin:0 0;-webkit-text-stroke:0.35px #1a1a1a;">2</div>
<div class="t" style="left:1394.0px;top:1716.2px;font-size:30.5px;line-height:30.5px;color:#1a1a1a;font-weight:400;transform:scaleX(0.9000);transform-origin:0 0;-webkit-text-stroke:0.35px #1a1a1a;">8</div>
<div class="t" style="left:1528.0px;top:1716.2px;font-size:30.5px;line-height:30.5px;color:#1a1a1a;font-weight:400;transform:scaleX(0.9000);transform-origin:0 0;-webkit-text-stroke:0.35px #1a1a1a;">21</div>
<div class="r" style="left:1623px;top:1714.1px;width:20.4px;height:27px;background:#3db26c;box-shadow:0 0 0 1.5px #e3ebd6"></div>
<div class="t" style="left:1711.4px;top:1710.2px;font-size:30.5px;line-height:30.5px;color:#1a1a1a;font-weight:400;transform:scaleX(0.9000);transform-origin:0 0;-webkit-text-stroke:0.35px #1a1a1a;">13</div>
<div class="r" style="left:976.0px;top:1913.0px;width:933.0px;height:253.0px;background:#ffffff;"></div>
<div class="r" style="left:995px;top:1932px;width:895px;height:102px;background:#f3f3f3;border-radius:3px;border:1px solid #e9e9e9;box-sizing:border-box"></div>
<div class="t" style="left:1035.0px;top:1966.0px;font-size:33px;line-height:33px;color:#111111;font-weight:400;transform:scaleX(0.9290);transform-origin:0 0;-webkit-text-stroke:0.35px #111111;">Top VMware VMs By CPU Ready Usage</div>
<div class="r" style="left:996px;top:2053px;width:887px;height:66px;background:linear-gradient(#fafafa,#f7f7f7)"></div>
<div class="r" style="left:996.0px;top:2119.0px;width:887.0px;height:2.0px;background:#dcdcdc;"></div>
<div class="t" style="left:1010.0px;top:2072.9px;font-size:29.5px;line-height:29.5px;color:#242424;font-weight:400;transform:scaleX(0.9093);transform-origin:0 0;-webkit-text-stroke:0.7px #242424;">Device Name</div>
<svg class="r" style="left:1181px;top:2081px" width="16" height="22" viewBox="0 0 16 22"><path d="M1 9 L8 1.5 L15 9 Z" fill="#b9b9b9"/><path d="M1 13 L8 20.5 L15 13 Z" fill="#dedede"/></svg>
<div class="t" style="left:1462.0px;top:2072.9px;font-size:29.5px;line-height:29.5px;color:#262626;font-weight:400;transform:scaleX(0.9131);transform-origin:0 0;-webkit-text-stroke:0.7px #262626;">Value ( Milliseconds )</div>
<div class="t" style="left:1015.0px;top:2139.3px;font-size:28.5px;line-height:28.5px;color:#1a1a1a;font-weight:400;transform:scaleX(0.9500);transform-origin:0 0;-webkit-text-stroke:0.35px #1a1a1a;">172.24.144.183</div>
<div class="t" style="left:1462.0px;top:2139.3px;font-size:28.5px;line-height:28.5px;color:#1a1a1a;font-weight:400;transform:scaleX(0.9500);transform-origin:0 0;-webkit-text-stroke:0.35px #1a1a1a;">797</div>
<div class="r" style="left:996.0px;top:2187.0px;width:887.0px;height:2.0px;background:#dedede;"></div>
<div class="r" style="left:1930.0px;top:164.0px;width:936.0px;height:470.0px;background:#ffffff;"></div>
<div class="r" style="left:1949px;top:183px;width:898px;height:102px;background:#f3f3f3;border-radius:3px;border:1px solid #e9e9e9;box-sizing:border-box"></div>
<div class="t" style="left:1989.0px;top:216.9px;font-size:33px;line-height:33px;color:#111111;font-weight:400;transform:scaleX(0.9438);transform-origin:0 0;-webkit-text-stroke:0.35px #111111;">Top VMware Hosts by Disk I/O Usage</div>
<div class="r" style="left:1950px;top:304px;width:890px;height:66px;background:linear-gradient(#fafafa,#f7f7f7)"></div>
<div class="r" style="left:1950.0px;top:370.0px;width:890.0px;height:2.0px;background:#dcdcdc;"></div>
<div class="t" style="left:1964.0px;top:323.9px;font-size:29.5px;line-height:29.5px;color:#242424;font-weight:400;transform:scaleX(0.9093);transform-origin:0 0;-webkit-text-stroke:0.7px #242424;">Device Name</div>
<svg class="r" style="left:2135px;top:332px" width="16" height="22" viewBox="0 0 16 22"><path d="M1 9 L8 1.5 L15 9 Z" fill="#b9b9b9"/><path d="M1 13 L8 20.5 L15 13 Z" fill="#dedede"/></svg>
<div class="t" style="left:2416.0px;top:323.9px;font-size:29.5px;line-height:29.5px;color:#262626;font-weight:400;transform:scaleX(0.8829);transform-origin:0 0;-webkit-text-stroke:0.7px #262626;">Value ( KBps )</div>
<div class="t" style="left:1969.0px;top:390.3px;font-size:28.5px;line-height:28.5px;color:#1a1a1a;font-weight:400;transform:scaleX(0.9500);transform-origin:0 0;-webkit-text-stroke:0.35px #1a1a1a;">N</div>
<div class="r" style="left:1990.0px;top:392.5px;width:114.7px;height:25.5px;background:#e4e4e4;z-index:20"></div>
<div class="t" style="left:2104.7px;top:390.3px;font-size:28.5px;line-height:28.5px;color:#1a1a1a;font-weight:400;transform:scaleX(0.9500);transform-origin:0 0;-webkit-text-stroke:0.35px #1a1a1a;">1</div>
<div class="t" style="left:2416.0px;top:390.3px;font-size:28.5px;line-height:28.5px;color:#1a1a1a;font-weight:400;transform:scaleX(0.9500);transform-origin:0 0;-webkit-text-stroke:0.35px #1a1a1a;">6110</div>
<div class="r" style="left:1950.0px;top:438.0px;width:890.0px;height:2.0px;background:#dedede;"></div>
<div class="t" style="left:1969.0px;top:458.3px;font-size:28.5px;line-height:28.5px;color:#1a1a1a;font-weight:400;transform:scaleX(0.9500);transform-origin:0 0;-webkit-text-stroke:0.35px #1a1a1a;">N</div>
<div class="r" style="left:1990.0px;top:460.5px;width:112.7px;height:25.5px;background:#e4e4e4;z-index:20"></div>
<div class="t" style="left:2102.7px;top:458.3px;font-size:28.5px;line-height:28.5px;color:#1a1a1a;font-weight:400;transform:scaleX(0.9500);transform-origin:0 0;-webkit-text-stroke:0.35px #1a1a1a;">2</div>
<div class="t" style="left:2416.0px;top:458.3px;font-size:28.5px;line-height:28.5px;color:#1a1a1a;font-weight:400;transform:scaleX(0.9500);transform-origin:0 0;-webkit-text-stroke:0.35px #1a1a1a;">5854</div>
<div class="r" style="left:1950.0px;top:506.0px;width:890.0px;height:2.0px;background:#a3a3a3;"></div>
<div class="r" style="left:1930.0px;top:654.0px;width:936.0px;height:1170.0px;background:#ffffff;"></div>
<div class="r" style="left:1949px;top:673px;width:898px;height:102px;background:#f3f3f3;border-radius:3px;border:1px solid #e9e9e9;box-sizing:border-box"></div>
<div class="t" style="left:1989.0px;top:707.0px;font-size:33px;line-height:33px;color:#111111;font-weight:400;transform:scaleX(0.9785);transform-origin:0 0;-webkit-text-stroke:0.35px #111111;">Top VMware VMs By Memory Utilizatior</div>
<div class="t" style="left:1989.0px;top:846.5px;font-size:30px;line-height:30px;color:#111111;font-weight:700;transform:scaleX(0.8887);transform-origin:0 0;">Device Name</div>
<div class="t" style="left:2348.0px;top:846.5px;font-size:30px;line-height:30px;color:#111111;font-weight:700;transform:scaleX(0.9680);transform-origin:0 0;">Min</div>
<div class="t" style="left:2482.0px;top:846.5px;font-size:30px;line-height:30px;color:#111111;font-weight:700;transform:scaleX(0.9596);transform-origin:0 0;">Max</div>
<div class="t" style="left:2577.0px;top:846.5px;font-size:30px;line-height:30px;color:#111111;font-weight:700;transform:scaleX(0.8818);transform-origin:0 0;">Avg</div>
<div class="t" style="left:1989.0px;top:927.1px;font-size:30.5px;line-height:30.5px;color:#1a1a1a;font-weight:400;transform:scaleX(0.9000);transform-origin:0 0;-webkit-text-stroke:0.35px #1a1a1a;">O</div>
<div class="r" style="left:2013.0px;top:926.7px;width:183.0px;height:30.9px;background:#e4e4e4;z-index:20"></div>
<div class="t" style="left:2196.0px;top:927.1px;font-size:30.5px;line-height:30.5px;color:#1a1a1a;font-weight:400;transform:scaleX(0.9000);transform-origin:0 0;-webkit-text-stroke:0.35px #1a1a1a;">e</div>
<div class="t" style="left:2348.0px;top:927.1px;font-size:30.5px;line-height:30.5px;color:#1a1a1a;font-weight:400;transform:scaleX(0.9000);transform-origin:0 0;-webkit-text-stroke:0.35px #1a1a1a;">28</div>
<div class="t" style="left:2482.0px;top:927.1px;font-size:30.5px;line-height:30.5px;color:#1a1a1a;font-weight:400;transform:scaleX(0.9000);transform-origin:0 0;-webkit-text-stroke:0.35px #1a1a1a;">38</div>
<div class="r" style="left:2577px;top:925.0px;width:53.4px;height:27px;background:#3db26c;box-shadow:0 0 0 1.5px #e3ebd6"></div>
<div class="t" style="left:2698.4px;top:921.1px;font-size:30.5px;line-height:30.5px;color:#1a1a1a;font-weight:400;transform:scaleX(0.9000);transform-origin:0 0;-webkit-text-stroke:0.35px #1a1a1a;">33</div>
<div class="t" style="left:1989.0px;top:1007.0px;font-size:30.5px;line-height:30.5px;color:#1a1a1a;font-weight:400;transform:scaleX(0.9000);transform-origin:0 0;-webkit-text-stroke:0.35px #1a1a1a;">O</div>
<div class="r" style="left:2015.0px;top:1006.6px;width:127.0px;height:30.9px;background:#e4e4e4;z-index:20"></div>
<div class="t" style="left:2142.0px;top:1007.0px;font-size:30.5px;line-height:30.5px;color:#1a1a1a;font-weight:400;transform:scaleX(0.9000);transform-origin:0 0;-webkit-text-stroke:0.35px #1a1a1a;">1</div>
<div class="t" style="left:2348.0px;top:1007.0px;font-size:30.5px;line-height:30.5px;color:#1a1a1a;font-weight:400;transform:scaleX(0.9000);transform-origin:0 0;-webkit-text-stroke:0.35px #1a1a1a;">27</div>
<div class="t" style="left:2482.0px;top:1007.0px;font-size:30.5px;line-height:30.5px;color:#1a1a1a;font-weight:400;transform:scaleX(0.9000);transform-origin:0 0;-webkit-text-stroke:0.35px #1a1a1a;">43</div>
<div class="r" style="left:2577px;top:1004.9px;width:53.4px;height:27px;background:#3db26c;box-shadow:0 0 0 1.5px #e3ebd6"></div>
<div class="t" style="left:2698.4px;top:1001.0px;font-size:30.5px;line-height:30.5px;color:#1a1a1a;font-weight:400;transform:scaleX(0.9000);transform-origin:0 0;-webkit-text-stroke:0.35px #1a1a1a;">33</div>
<div class="t" style="left:1989.0px;top:1086.9px;font-size:30.5px;line-height:30.5px;color:#1a1a1a;font-weight:400;transform:scaleX(0.9000);transform-origin:0 0;-webkit-text-stroke:0.35px #1a1a1a;">O</div>
<div class="r" style="left:2013.0px;top:1086.5px;width:160.5px;height:30.9px;background:#e4e4e4;z-index:20"></div>
<div class="t" style="left:2173.5px;top:1086.9px;font-size:30.5px;line-height:30.5px;color:#1a1a1a;font-weight:400;transform:scaleX(0.9000);transform-origin:0 0;-webkit-text-stroke:0.35px #1a1a1a;">4</div>
<div class="t" style="left:2348.0px;top:1086.9px;font-size:30.5px;line-height:30.5px;color:#1a1a1a;font-weight:400;transform:scaleX(0.9000);transform-origin:0 0;-webkit-text-stroke:0.35px #1a1a1a;">20</div>
<div class="t" style="left:2482.0px;top:1086.9px;font-size:30.5px;line-height:30.5px;color:#1a1a1a;font-weight:400;transform:scaleX(0.9000);transform-origin:0 0;-webkit-text-stroke:0.35px #1a1a1a;">53</div>
<div class="r" style="left:2577px;top:1084.8px;width:46.8px;height:27px;background:#3db26c;box-shadow:0 0 0 1.5px #e3ebd6"></div>
<div class="t" style="left:2691.8px;top:1080.9px;font-size:30.5px;line-height:30.5px;color:#1a1a1a;font-weight:400;transform:scaleX(0.9000);transform-origin:0 0;-webkit-text-stroke:0.35px #1a1a1a;">29</div>
<div class="t" style="left:1989.0px;top:1166.8px;font-size:30.5px;line-height:30.5px;color:#1a1a1a;font-weight:400;transform:scaleX(0.9000);transform-origin:0 0;-webkit-text-stroke:0.35px #1a1a1a;">O</div>
<div class="r" style="left:2013.0px;top:1166.4px;width:160.5px;height:30.9px;background:#e4e4e4;z-index:20"></div>
<div class="t" style="left:2173.5px;top:1166.8px;font-size:30.5px;line-height:30.5px;color:#1a1a1a;font-weight:400;transform:scaleX(0.9000);transform-origin:0 0;-webkit-text-stroke:0.35px #1a1a1a;">3</div>
<div class="t" style="left:2348.0px;top:1166.8px;font-size:30.5px;line-height:30.5px;color:#1a1a1a;font-weight:400;transform:scaleX(0.9000);transform-origin:0 0;-webkit-text-stroke:0.35px #1a1a1a;">15</div>
<div class="t" style="left:2482.0px;top:1166.8px;font-size:30.5px;line-height:30.5px;color:#1a1a1a;font-weight:400;transform:scaleX(0.9000);transform-origin:0 0;-webkit-text-stroke:0.35px #1a1a1a;">37</div>
<div class="r" style="left:2577px;top:1164.7px;width:32.0px;height:27px;background:#3db26c;box-shadow:0 0 0 1.5px #e3ebd6"></div>
<div class="t" style="left:2677.0px;top:1160.8px;font-size:30.5px;line-height:30.5px;color:#1a1a1a;font-weight:400;transform:scaleX(0.9000);transform-origin:0 0;-webkit-text-stroke:0.35px #1a1a1a;">20</div>
<div class="t" style="left:1989.0px;top:1246.7px;font-size:30.5px;line-height:30.5px;color:#1a1a1a;font-weight:400;transform:scaleX(0.9000);transform-origin:0 0;-webkit-text-stroke:0.35px #1a1a1a;">O</div>
<div class="r" style="left:2013.4px;top:1246.3px;width:161.5px;height:30.9px;background:#e4e4e4;z-index:20"></div>
<div class="t" style="left:2174.9px;top:1246.7px;font-size:30.5px;line-height:30.5px;color:#1a1a1a;font-weight:400;transform:scaleX(0.9000);transform-origin:0 0;-webkit-text-stroke:0.35px #1a1a1a;">2</div>
<div class="t" style="left:2348.0px;top:1246.7px;font-size:30.5px;line-height:30.5px;color:#1a1a1a;font-weight:400;transform:scaleX(0.9000);transform-origin:0 0;-webkit-text-stroke:0.35px #1a1a1a;">14</div>
<div class="t" style="left:2482.0px;top:1246.7px;font-size:30.5px;line-height:30.5px;color:#1a1a1a;font-weight:400;transform:scaleX(0.9000);transform-origin:0 0;-webkit-text-stroke:0.35px #1a1a1a;">35</div>
<div class="r" style="left:2577px;top:1244.6px;width:30.3px;height:27px;background:#3db26c;box-shadow:0 0 0 1.5px #e3ebd6"></div>
<div class="t" style="left:2675.3px;top:1240.7px;font-size:30.5px;line-height:30.5px;color:#1a1a1a;font-weight:400;transform:scaleX(0.9000);transform-origin:0 0;-webkit-text-stroke:0.35px #1a1a1a;">19</div>
<div class="t" style="left:1989.0px;top:1326.6px;font-size:30.5px;line-height:30.5px;color:#1a1a1a;font-weight:400;transform:scaleX(0.9000);transform-origin:0 0;-webkit-text-stroke:0.35px #1a1a1a;">O</div>
<div class="r" style="left:2012.0px;top:1326.2px;width:161.0px;height:30.9px;background:#e4e4e4;z-index:20"></div>
<div class="t" style="left:2173.0px;top:1326.6px;font-size:30.5px;line-height:30.5px;color:#1a1a1a;font-weight:400;transform:scaleX(0.9000);transform-origin:0 0;-webkit-text-stroke:0.35px #1a1a1a;">2</div>
<div class="t" style="left:2348.0px;top:1326.6px;font-size:30.5px;line-height:30.5px;color:#1a1a1a;font-weight:400;transform:scaleX(0.9000);transform-origin:0 0;-webkit-text-stroke:0.35px #1a1a1a;">10</div>
<div class="t" style="left:2482.0px;top:1326.6px;font-size:30.5px;line-height:30.5px;color:#1a1a1a;font-weight:400;transform:scaleX(0.9000);transform-origin:0 0;-webkit-text-stroke:0.35px #1a1a1a;">22</div>
<div class="r" style="left:2577px;top:1324.5px;width:22.1px;height:27px;background:#3db26c;box-shadow:0 0 0 1.5px #e3ebd6"></div>
<div class="t" style="left:2667.1px;top:1320.6px;font-size:30.5px;line-height:30.5px;color:#1a1a1a;font-weight:400;transform:scaleX(0.9000);transform-origin:0 0;-webkit-text-stroke:0.35px #1a1a1a;">14</div>
<div class="t" style="left:1989.0px;top:1406.5px;font-size:30.5px;line-height:30.5px;color:#1a1a1a;font-weight:400;transform:scaleX(0.9000);transform-origin:0 0;-webkit-text-stroke:0.35px #1a1a1a;">O</div>
<div class="r" style="left:2013.0px;top:1406.1px;width:171.0px;height:30.9px;background:#e4e4e4;z-index:20"></div>
<div class="t" style="left:2184.0px;top:1406.5px;font-size:30.5px;line-height:30.5px;color:#1a1a1a;font-weight:400;transform:scaleX(0.9000);transform-origin:0 0;-webkit-text-stroke:0.35px #1a1a1a;">n</div>
<div class="t" style="left:2348.0px;top:1406.5px;font-size:30.5px;line-height:30.5px;color:#1a1a1a;font-weight:400;transform:scaleX(0.9000);transform-origin:0 0;-webkit-text-stroke:0.35px #1a1a1a;">10</div>
<div class="t" style="left:2482.0px;top:1406.5px;font-size:30.5px;line-height:30.5px;color:#1a1a1a;font-weight:400;transform:scaleX(0.9000);transform-origin:0 0;-webkit-text-stroke:0.35px #1a1a1a;">20</div>
<div class="r" style="left:2577px;top:1404.4px;width:20.4px;height:27px;background:#3db26c;box-shadow:0 0 0 1.5px #e3ebd6"></div>
<div class="t" style="left:2665.4px;top:1400.5px;font-size:30.5px;line-height:30.5px;color:#1a1a1a;font-weight:400;transform:scaleX(0.9000);transform-origin:0 0;-webkit-text-stroke:0.35px #1a1a1a;">13</div>
<div class="t" style="left:1989.0px;top:1486.4px;font-size:30.5px;line-height:30.5px;color:#1a1a1a;font-weight:400;transform:scaleX(0.9000);transform-origin:0 0;-webkit-text-stroke:0.35px #1a1a1a;">172.</div>
<div class="r" style="left:2046.0px;top:1486.0px;width:142.6px;height:30.9px;background:#e4e4e4;z-index:20"></div>
<div class="t" style="left:2348.0px;top:1486.4px;font-size:30.5px;line-height:30.5px;color:#1a1a1a;font-weight:400;transform:scaleX(0.9000);transform-origin:0 0;-webkit-text-stroke:0.35px #1a1a1a;">10</div>
<div class="t" style="left:2482.0px;top:1486.4px;font-size:30.5px;line-height:30.5px;color:#1a1a1a;font-weight:400;transform:scaleX(0.9000);transform-origin:0 0;-webkit-text-stroke:0.35px #1a1a1a;">15</div>
<div class="r" style="left:2577px;top:1484.3px;width:18.8px;height:27px;background:#3db26c;box-shadow:0 0 0 1.5px #e3ebd6"></div>
<div class="t" style="left:2663.8px;top:1480.4px;font-size:30.5px;line-height:30.5px;color:#1a1a1a;font-weight:400;transform:scaleX(0.9000);transform-origin:0 0;-webkit-text-stroke:0.35px #1a1a1a;">12</div>
<div class="t" style="left:1989.0px;top:1566.3px;font-size:30.5px;line-height:30.5px;color:#1a1a1a;font-weight:400;transform:scaleX(0.9000);transform-origin:0 0;-webkit-text-stroke:0.35px #1a1a1a;">O</div>
<div class="r" style="left:2013.0px;top:1565.9px;width:114.0px;height:30.9px;background:#e4e4e4;z-index:20"></div>
<div class="t" style="left:2127.0px;top:1566.3px;font-size:30.5px;line-height:30.5px;color:#1a1a1a;font-weight:400;transform:scaleX(0.9000);transform-origin:0 0;-webkit-text-stroke:0.35px #1a1a1a;">2</div>
<div class="t" style="left:2348.0px;top:1566.3px;font-size:30.5px;line-height:30.5px;color:#1a1a1a;font-weight:400;transform:scaleX(0.9000);transform-origin:0 0;-webkit-text-stroke:0.35px #1a1a1a;">8</div>
<div class="t" style="left:2482.0px;top:1566.3px;font-size:30.5px;line-height:30.5px;color:#1a1a1a;font-weight:400;transform:scaleX(0.9000);transform-origin:0 0;-webkit-text-stroke:0.35px #1a1a1a;">14</div>
<div class="r" style="left:2577px;top:1564.2px;width:17.1px;height:27px;background:#3db26c;box-shadow:0 0 0 1.5px #e3ebd6"></div>
<div class="t" style="left:2664.2px;top:1560.3px;font-size:30.5px;line-height:30.5px;color:#1a1a1a;font-weight:400;transform:scaleX(0.9000);transform-origin:0 0;-webkit-text-stroke:0.35px #1a1a1a;">11</div>
<div class="t" style="left:1989.0px;top:1646.2px;font-size:30.5px;line-height:30.5px;color:#1a1a1a;font-weight:400;transform:scaleX(0.9000);transform-origin:0 0;-webkit-text-stroke:0.35px #1a1a1a;">V</div>
<div class="r" style="left:2011.0px;top:1645.8px;width:171.0px;height:30.9px;background:#e4e4e4;z-index:20"></div>
<div class="t" style="left:2182.0px;top:1646.2px;font-size:30.5px;line-height:30.5px;color:#1a1a1a;font-weight:400;transform:scaleX(0.9000);transform-origin:0 0;-webkit-text-stroke:0.35px #1a1a1a;">u</div>
<div class="t" style="left:2348.0px;top:1646.2px;font-size:30.5px;line-height:30.5px;color:#1a1a1a;font-weight:400;transform:scaleX(0.9000);transform-origin:0 0;-webkit-text-stroke:0.35px #1a1a1a;">4</div>
<div class="t" style="left:2482.0px;top:1646.2px;font-size:30.5px;line-height:30.5px;color:#1a1a1a;font-weight:400;transform:scaleX(0.9000);transform-origin:0 0;-webkit-text-stroke:0.35px #1a1a1a;">11</div>
<div class="r" style="left:2577px;top:1644.1px;width:8.9px;height:27px;background:#3db26c;box-shadow:0 0 0 1.5px #e3ebd6"></div>
<div class="t" style="left:2669.1px;top:1640.2px;font-size:30.5px;line-height:30.5px;color:#1a1a1a;font-weight:400;transform:scaleX(0.9000);transform-origin:0 0;-webkit-text-stroke:0.35px #1a1a1a;">6</div>
<div class="r" style="left:1930.0px;top:1844.0px;width:936.0px;height:322.0px;background:#ffffff;"></div>
<div class="r" style="left:1949px;top:1863px;width:898px;height:102px;background:#f3f3f3;border-radius:3px;border:1px solid #e9e9e9;box-sizing:border-box"></div>
<div class="t" style="left:1989.0px;top:1897.0px;font-size:33px;line-height:33px;color:#111111;font-weight:400;transform:scaleX(0.9336);transform-origin:0 0;-webkit-text-stroke:0.35px #111111;">Top VMware Vms By Swap Memory Usage</div>
<div class="r" style="left:1950px;top:1984px;width:890px;height:66px;background:linear-gradient(#fafafa,#f7f7f7)"></div>
<div class="r" style="left:1950.0px;top:2050.0px;width:890.0px;height:2.0px;background:#dcdcdc;"></div>
<div class="t" style="left:1964.0px;top:2003.9px;font-size:29.5px;line-height:29.5px;color:#242424;font-weight:400;transform:scaleX(0.9093);transform-origin:0 0;-webkit-text-stroke:0.7px #242424;">Device Name</div>
<svg class="r" style="left:2135px;top:2012px" width="16" height="22" viewBox="0 0 16 22"><path d="M1 9 L8 1.5 L15 9 Z" fill="#b9b9b9"/><path d="M1 13 L8 20.5 L15 13 Z" fill="#dedede"/></svg>
<div class="t" style="left:2416.0px;top:2003.9px;font-size:29.5px;line-height:29.5px;color:#262626;font-weight:400;transform:scaleX(0.8862);transform-origin:0 0;-webkit-text-stroke:0.7px #262626;">Value ( KB )</div>
<div class="t" style="left:1969.0px;top:2070.3px;font-size:28.5px;line-height:28.5px;color:#1a1a1a;font-weight:400;transform:scaleX(0.9500);transform-origin:0 0;-webkit-text-stroke:0.35px #1a1a1a;">172.</div>
<div class="r" style="left:2022.0px;top:2072.5px;width:132.7px;height:25.5px;background:#e4e4e4;z-index:20"></div>
<div class="t" style="left:2416.0px;top:2070.3px;font-size:28.5px;line-height:28.5px;color:#1a1a1a;font-weight:400;transform:scaleX(0.9500);transform-origin:0 0;-webkit-text-stroke:0.35px #1a1a1a;">0</div>
<div class="r" style="left:1950.0px;top:2118.0px;width:890.0px;height:2.0px;background:#dedede;"></div>
<div class="t" style="left:1969.0px;top:2138.3px;font-size:28.5px;line-height:28.5px;color:#1a1a1a;font-weight:400;transform:scaleX(0.9500);transform-origin:0 0;-webkit-text-stroke:0.35px #1a1a1a;">172.</div>
<div class="r" style="left:2022.0px;top:2140.5px;width:132.5px;height:25.5px;background:#e4e4e4;z-index:20"></div>
<div class="t" style="left:2416.0px;top:2138.3px;font-size:28.5px;line-height:28.5px;color:#1a1a1a;font-weight:400;transform:scaleX(0.9500);transform-origin:0 0;-webkit-text-stroke:0.35px #1a1a1a;">0</div>
<div class="r" style="left:1950.0px;top:2186.0px;width:890.0px;height:2.0px;background:#dedede;"></div>
<div class="r" style="left:2886.0px;top:164.0px;width:934.0px;height:470.0px;background:#ffffff;"></div>
<div class="r" style="left:2905px;top:183px;width:896px;height:102px;background:#f3f3f3;border-radius:3px;border:1px solid #e9e9e9;box-sizing:border-box"></div>
<div class="t" style="left:2945.0px;top:216.9px;font-size:33px;line-height:33px;color:#111111;font-weight:400;transform:scaleX(0.9557);transform-origin:0 0;-webkit-text-stroke:0.35px #111111;">Top VMware Hosts By Network Usage</div>
<div class="r" style="left:2906px;top:304px;width:888px;height:66px;background:linear-gradient(#fafafa,#f7f7f7)"></div>
<div class="r" style="left:2906.0px;top:370.0px;width:888.0px;height:2.0px;background:#dcdcdc;"></div>
<div class="t" style="left:2920.0px;top:323.9px;font-size:29.5px;line-height:29.5px;color:#242424;font-weight:400;transform:scaleX(0.9093);transform-origin:0 0;-webkit-text-stroke:0.7px #242424;">Device Name</div>
<svg class="r" style="left:3091px;top:332px" width="16" height="22" viewBox="0 0 16 22"><path d="M1 9 L8 1.5 L15 9 Z" fill="#b9b9b9"/><path d="M1 13 L8 20.5 L15 13 Z" fill="#dedede"/></svg>
<div class="t" style="left:3372.0px;top:323.9px;font-size:29.5px;line-height:29.5px;color:#262626;font-weight:400;transform:scaleX(0.8829);transform-origin:0 0;-webkit-text-stroke:0.7px #262626;">Value ( KBps )</div>
<div class="t" style="left:2925.0px;top:390.3px;font-size:28.5px;line-height:28.5px;color:#1a1a1a;font-weight:400;transform:scaleX(0.9500);transform-origin:0 0;-webkit-text-stroke:0.35px #1a1a1a;">N</div>
<div class="r" style="left:2946.0px;top:392.5px;width:111.6px;height:25.5px;background:#e4e4e4;z-index:20"></div>
<div class="t" style="left:3057.6px;top:390.3px;font-size:28.5px;line-height:28.5px;color:#1a1a1a;font-weight:400;transform:scaleX(0.9500);transform-origin:0 0;-webkit-text-stroke:0.35px #1a1a1a;">2</div>
<div class="t" style="left:3372.0px;top:390.3px;font-size:28.5px;line-height:28.5px;color:#1a1a1a;font-weight:400;transform:scaleX(0.9500);transform-origin:0 0;-webkit-text-stroke:0.35px #1a1a1a;">370</div>
<div class="r" style="left:2906.0px;top:438.0px;width:888.0px;height:2.0px;background:#dedede;"></div>
<div class="t" style="left:2925.0px;top:458.3px;font-size:28.5px;line-height:28.5px;color:#1a1a1a;font-weight:400;transform:scaleX(0.9500);transform-origin:0 0;-webkit-text-stroke:0.35px #1a1a1a;">N</div>
<div class="r" style="left:2946.0px;top:460.5px;width:113.5px;height:25.5px;background:#e4e4e4;z-index:20"></div>
<div class="t" style="left:3059.5px;top:458.3px;font-size:28.5px;line-height:28.5px;color:#1a1a1a;font-weight:400;transform:scaleX(0.9500);transform-origin:0 0;-webkit-text-stroke:0.35px #1a1a1a;">1</div>
<div class="t" style="left:3372.0px;top:458.3px;font-size:28.5px;line-height:28.5px;color:#1a1a1a;font-weight:400;transform:scaleX(0.9500);transform-origin:0 0;-webkit-text-stroke:0.35px #1a1a1a;">228</div>
<div class="r" style="left:2906.0px;top:506.0px;width:888.0px;height:2.0px;background:#a3a3a3;"></div>
<div class="r" style="left:2886.0px;top:654.0px;width:934.0px;height:960.0px;background:#ffffff;"></div>
<div class="r" style="left:2905px;top:673px;width:896px;height:102px;background:#f3f3f3;border-radius:3px;border:1px solid #e9e9e9;box-sizing:border-box"></div>
<div class="t" style="left:2945.0px;top:707.0px;font-size:33px;line-height:33px;color:#111111;font-weight:400;transform:scaleX(0.9463);transform-origin:0 0;-webkit-text-stroke:0.35px #111111;">Top VMware VMs by Disk I/O Usage</div>
<div class="r" style="left:2906px;top:794px;width:888px;height:66px;background:linear-gradient(#fafafa,#f7f7f7)"></div>
<div class="r" style="left:2906.0px;top:860.0px;width:888.0px;height:2.0px;background:#dcdcdc;"></div>
<div class="t" style="left:2920.0px;top:813.9px;font-size:29.5px;line-height:29.5px;color:#242424;font-weight:400;transform:scaleX(0.9093);transform-origin:0 0;-webkit-text-stroke:0.7px #242424;">Device Name</div>
<svg class="r" style="left:3091px;top:822px" width="16" height="22" viewBox="0 0 16 22"><path d="M1 9 L8 1.5 L15 9 Z" fill="#b9b9b9"/><path d="M1 13 L8 20.5 L15 13 Z" fill="#dedede"/></svg>
<div class="t" style="left:3372.0px;top:813.9px;font-size:29.5px;line-height:29.5px;color:#262626;font-weight:400;transform:scaleX(0.8829);transform-origin:0 0;-webkit-text-stroke:0.7px #262626;">Value ( KBps )</div>
<div class="t" style="left:2925.0px;top:880.3px;font-size:28.5px;line-height:28.5px;color:#1a1a1a;font-weight:400;transform:scaleX(0.9500);transform-origin:0 0;-webkit-text-stroke:0.35px #1a1a1a;">O</div>
<div class="r" style="left:2947.5px;top:882.5px;width:100.3px;height:25.5px;background:#e4e4e4;z-index:20"></div>
<div class="t" style="left:3047.8px;top:880.3px;font-size:28.5px;line-height:28.5px;color:#1a1a1a;font-weight:400;transform:scaleX(0.9500);transform-origin:0 0;-webkit-text-stroke:0.35px #1a1a1a;">v</div>
<div class="t" style="left:3372.0px;top:880.3px;font-size:28.5px;line-height:28.5px;color:#1a1a1a;font-weight:400;transform:scaleX(0.9500);transform-origin:0 0;-webkit-text-stroke:0.35px #1a1a1a;">2576</div>
<div class="r" style="left:2906.0px;top:928.0px;width:888.0px;height:2.0px;background:#dedede;"></div>
<div class="t" style="left:2925.0px;top:948.3px;font-size:28.5px;line-height:28.5px;color:#1a1a1a;font-weight:400;transform:scaleX(0.9500);transform-origin:0 0;-webkit-text-stroke:0.35px #1a1a1a;">O</div>
<div class="r" style="left:2947.5px;top:950.5px;width:147.5px;height:25.5px;background:#e4e4e4;z-index:20"></div>
<div class="t" style="left:3095.0px;top:948.3px;font-size:28.5px;line-height:28.5px;color:#1a1a1a;font-weight:400;transform:scaleX(0.9500);transform-origin:0 0;-webkit-text-stroke:0.35px #1a1a1a;">2</div>
<div class="t" style="left:3372.0px;top:948.3px;font-size:28.5px;line-height:28.5px;color:#1a1a1a;font-weight:400;transform:scaleX(0.9500);transform-origin:0 0;-webkit-text-stroke:0.35px #1a1a1a;">2250</div>
<div class="r" style="left:2906.0px;top:996.0px;width:888.0px;height:2.0px;background:#dedede;"></div>
<div class="t" style="left:2925.0px;top:1016.3px;font-size:28.5px;line-height:28.5px;color:#1a1a1a;font-weight:400;transform:scaleX(0.9500);transform-origin:0 0;-webkit-text-stroke:0.35px #1a1a1a;">O</div>
<div class="r" style="left:2947.5px;top:1018.5px;width:105.0px;height:25.5px;background:#e4e4e4;z-index:20"></div>
<div class="t" style="left:3052.5px;top:1016.3px;font-size:28.5px;line-height:28.5px;color:#1a1a1a;font-weight:400;transform:scaleX(0.9500);transform-origin:0 0;-webkit-text-stroke:0.35px #1a1a1a;">2</div>
<div class="t" style="left:3372.0px;top:1016.3px;font-size:28.5px;line-height:28.5px;color:#1a1a1a;font-weight:400;transform:scaleX(0.9500);transform-origin:0 0;-webkit-text-stroke:0.35px #1a1a1a;">1245</div>
<div class="r" style="left:2906.0px;top:1064.0px;width:888.0px;height:2.0px;background:#dedede;"></div>
<div class="t" style="left:2925.0px;top:1084.3px;font-size:28.5px;line-height:28.5px;color:#1a1a1a;font-weight:400;transform:scaleX(0.9500);transform-origin:0 0;-webkit-text-stroke:0.35px #1a1a1a;">O</div>
<div class="r" style="left:2946.0px;top:1086.5px;width:150.0px;height:25.5px;background:#e4e4e4;z-index:20"></div>
<div class="t" style="left:3096.0px;top:1084.3px;font-size:28.5px;line-height:28.5px;color:#1a1a1a;font-weight:400;transform:scaleX(0.9500);transform-origin:0 0;-webkit-text-stroke:0.35px #1a1a1a;">3</div>
<div class="t" style="left:3372.0px;top:1084.3px;font-size:28.5px;line-height:28.5px;color:#1a1a1a;font-weight:400;transform:scaleX(0.9500);transform-origin:0 0;-webkit-text-stroke:0.35px #1a1a1a;">962</div>
<div class="r" style="left:2906.0px;top:1132.0px;width:888.0px;height:2.0px;background:#dedede;"></div>
<div class="t" style="left:2925.0px;top:1152.3px;font-size:28.5px;line-height:28.5px;color:#1a1a1a;font-weight:400;transform:scaleX(0.9500);transform-origin:0 0;-webkit-text-stroke:0.35px #1a1a1a;">O</div>
<div class="r" style="left:2946.0px;top:1154.5px;width:169.5px;height:25.5px;background:#e4e4e4;z-index:20"></div>
<div class="t" style="left:3115.5px;top:1152.3px;font-size:28.5px;line-height:28.5px;color:#1a1a1a;font-weight:400;transform:scaleX(0.9500);transform-origin:0 0;-webkit-text-stroke:0.35px #1a1a1a;">e</div>
<div class="t" style="left:3372.0px;top:1152.3px;font-size:28.5px;line-height:28.5px;color:#1a1a1a;font-weight:400;transform:scaleX(0.9500);transform-origin:0 0;-webkit-text-stroke:0.35px #1a1a1a;">907</div>
<div class="r" style="left:2906.0px;top:1200.0px;width:888.0px;height:2.0px;background:#dedede;"></div>
<div class="t" style="left:2925.0px;top:1220.3px;font-size:28.5px;line-height:28.5px;color:#1a1a1a;font-weight:400;transform:scaleX(0.9500);transform-origin:0 0;-webkit-text-stroke:0.35px #1a1a1a;">O</div>
<div class="r" style="left:2947.0px;top:1222.5px;width:148.0px;height:25.5px;background:#e4e4e4;z-index:20"></div>
<div class="t" style="left:3095.0px;top:1220.3px;font-size:28.5px;line-height:28.5px;color:#1a1a1a;font-weight:400;transform:scaleX(0.9500);transform-origin:0 0;-webkit-text-stroke:0.35px #1a1a1a;">4</div>
<div class="t" style="left:3372.0px;top:1220.3px;font-size:28.5px;line-height:28.5px;color:#1a1a1a;font-weight:400;transform:scaleX(0.9500);transform-origin:0 0;-webkit-text-stroke:0.35px #1a1a1a;">629</div>
<div class="r" style="left:2906.0px;top:1268.0px;width:888.0px;height:2.0px;background:#dedede;"></div>
<div class="t" style="left:2925.0px;top:1288.3px;font-size:28.5px;line-height:28.5px;color:#1a1a1a;font-weight:400;transform:scaleX(0.9500);transform-origin:0 0;-webkit-text-stroke:0.35px #1a1a1a;">O</div>
<div class="r" style="left:2947.0px;top:1290.5px;width:78.5px;height:25.5px;background:#e4e4e4;z-index:20"></div>
<div class="t" style="left:3025.5px;top:1288.3px;font-size:28.5px;line-height:28.5px;color:#1a1a1a;font-weight:400;transform:scaleX(0.9500);transform-origin:0 0;-webkit-text-stroke:0.35px #1a1a1a;">2</div>
<div class="t" style="left:3372.0px;top:1288.3px;font-size:28.5px;line-height:28.5px;color:#1a1a1a;font-weight:400;transform:scaleX(0.9500);transform-origin:0 0;-webkit-text-stroke:0.35px #1a1a1a;">540</div>
<div class="r" style="left:2906.0px;top:1336.0px;width:888.0px;height:2.0px;background:#dedede;"></div>
<div class="t" style="left:2925.0px;top:1356.3px;font-size:28.5px;line-height:28.5px;color:#1a1a1a;font-weight:400;transform:scaleX(0.9500);transform-origin:0 0;-webkit-text-stroke:0.35px #1a1a1a;">V</div>
<div class="r" style="left:2944.0px;top:1358.5px;width:159.0px;height:25.5px;background:#e4e4e4;z-index:20"></div>
<div class="t" style="left:3103.0px;top:1356.3px;font-size:28.5px;line-height:28.5px;color:#1a1a1a;font-weight:400;transform:scaleX(0.9500);transform-origin:0 0;-webkit-text-stroke:0.35px #1a1a1a;">u</div>
<div class="t" style="left:3372.0px;top:1356.3px;font-size:28.5px;line-height:28.5px;color:#1a1a1a;font-weight:400;transform:scaleX(0.9500);transform-origin:0 0;-webkit-text-stroke:0.35px #1a1a1a;">529</div>
<div class="r" style="left:2906.0px;top:1404.0px;width:888.0px;height:2.0px;background:#dedede;"></div>
<div class="t" style="left:2925.0px;top:1424.3px;font-size:28.5px;line-height:28.5px;color:#1a1a1a;font-weight:400;transform:scaleX(0.9500);transform-origin:0 0;-webkit-text-stroke:0.35px #1a1a1a;">O</div>
<div class="r" style="left:2947.0px;top:1426.5px;width:120.0px;height:25.5px;background:#e4e4e4;z-index:20"></div>
<div class="t" style="left:3067.0px;top:1424.3px;font-size:28.5px;line-height:28.5px;color:#1a1a1a;font-weight:400;transform:scaleX(0.9500);transform-origin:0 0;-webkit-text-stroke:0.35px #1a1a1a;">1</div>
<div class="t" style="left:3372.0px;top:1424.3px;font-size:28.5px;line-height:28.5px;color:#1a1a1a;font-weight:400;transform:scaleX(0.9500);transform-origin:0 0;-webkit-text-stroke:0.35px #1a1a1a;">415</div>
<div class="r" style="left:2906.0px;top:1472.0px;width:888.0px;height:2.0px;background:#dedede;"></div>
<div class="t" style="left:2925.0px;top:1492.3px;font-size:28.5px;line-height:28.5px;color:#1a1a1a;font-weight:400;transform:scaleX(0.9500);transform-origin:0 0;-webkit-text-stroke:0.35px #1a1a1a;">P</div>
<div class="r" style="left:2942.0px;top:1494.5px;width:116.0px;height:25.5px;background:#e4e4e4;z-index:20"></div>
<div class="t" style="left:3058.0px;top:1492.3px;font-size:28.5px;line-height:28.5px;color:#1a1a1a;font-weight:400;transform:scaleX(0.9500);transform-origin:0 0;-webkit-text-stroke:0.35px #1a1a1a;">e</div>
<div class="t" style="left:3372.0px;top:1492.3px;font-size:28.5px;line-height:28.5px;color:#1a1a1a;font-weight:400;transform:scaleX(0.9500);transform-origin:0 0;-webkit-text-stroke:0.35px #1a1a1a;">300</div>
<div class="r" style="left:2906.0px;top:1540.0px;width:888.0px;height:2.0px;background:#a3a3a3;"></div>
<div class="r" style="left:3701.0px;top:2084.0px;width:88.0px;height:62.0px;background:#2ea05a;"></div>
<div class="r" style="left:3701.0px;top:2084.0px;width:88.0px;height:8.0px;background:#3cb36c;"></div>
<div class="r" style="left:2560px;top:690px;width:280px;height:60px;background:#f3f3f3"></div>
<svg class="r" style="left:2570px;top:707px" width="260" height="32" viewBox="0 0 260 32"><path d="M8.5 16.5 A10.3 10.3 0 1 1 13.6 25.4" fill="none" stroke="#7b7e81" stroke-width="3.2"/><path d="M2.6 15.7 L14 15.7 L8.6 22.2 Z" fill="#7b7e81"/><g transform="translate(61,3)"><path d="M2 1.8 H13.3 L19.6 8 V22.6 H2 Z" fill="none" stroke="#7b7e81" stroke-width="2.4" stroke-linejoin="round"/><path d="M13 1.8 L19.6 8.2 L13 8.2 Z" fill="#7b7e81"/><path d="M6.8 10.8 L4.2 14.3 L6.8 17.8 M14.4 10.8 L17 14.3 L14.4 17.8 M11.6 9.6 L9.6 19.2" fill="none" stroke="#7b7e81" stroke-width="1.9" stroke-linecap="round"/></g><g transform="translate(112,3)"><path d="M19.7 2.55 H6 Q1.95 2.55 1.95 6.6 V18.55 Q1.95 22.6 6 22.6 H17.8 Q21.85 22.6 21.85 18.55 V16.4" fill="none" stroke="#7b7e81" stroke-width="2.3" stroke-linecap="round"/><g transform="translate(11,19.8) rotate(-45)"><path d="M0 -2.4 L1 -3.4 H17.9 V3.4 H1 L0 2.4 Z" fill="#7b7e81"/><rect x="18.6" y="-3.4" width="5.2" height="6.8" rx="1.8" fill="#7b7e81"/><circle cx="3.2" cy="0" r="1.1" fill="#f3f3f3"/></g></g><g transform="translate(173,6)"><path d="M6 1 H18 V13 Z" fill="#7b7e81"/><path d="M1 5 V17 H13 Z" fill="#7b7e81"/></g><g transform="translate(220,2)"><path d="M0.8 5 H22.6" stroke="#d6d8d9" stroke-width="2.2"/><path d="M7.8 5 V2.4 Q7.8 1 9.2 1 H14.2 Q15.6 1 15.6 2.4 V5" fill="none" stroke="#d6d8d9" stroke-width="2"/><path d="M3.4 6 V22.6 Q3.4 24.2 5 24.2 H18.4 Q20 24.2 20 22.6 V6" fill="none" stroke="#d6d8d9" stroke-width="2.4"/><path d="M8 9.5 V19.5 M11.7 9.5 V19.5 M15.4 9.5 V19.5" stroke="#d6d8d9" stroke-width="1.8"/></g></svg>
<svg class="r" style="left:3701px;top:2084px" width="88" height="62" viewBox="0 0 88 62"><path d="M30 26 V21 Q30 16.5 34.5 16.5 H61 Q65.5 16.5 65.5 21 V36.5 Q65.5 41 61 41 H58.5" fill="none" stroke="#cfeedd" stroke-width="2"/><path d="M27 27 H54 Q58.5 27 58.5 31.5 V46 Q58.5 50.5 54 50.5 H40 L32 58.5 V50.5 H27 Q22.5 50.5 22.5 46 V31.5 Q22.5 27 27 27 Z" fill="#2ea05a" stroke="#cfeedd" stroke-width="2" stroke-linejoin="round"/><path d="M30 34.5 H41.5 M30 39 H51.5 M30 43.5 H51.5" stroke="#cfeedd" stroke-width="2"/></svg>
<div class="r" style="left:1720px;top:1466px;width:400px;height:400px;border-radius:32px;background:#f0f0f0;mix-blend-mode:multiply;z-index:10"></div>
<svg class="r" style="left:1720px;top:1466px;z-index:11" width="400" height="400" viewBox="1720 1466 400 400"><path d="M1824 1616 H1857 L1888 1590.5 Q1894 1586 1894 1593 V1694 Q1894 1701 1888 1696.5 L1857 1669 H1824 Q1820 1669 1820 1665 V1620 Q1820 1616 1824 1616 Z" fill="#ffffff"/><path d="M1929.5 1614 A48 48 0 0 1 1929.5 1672" fill="none" stroke="#fff" stroke-width="7.5" stroke-linecap="round"/><path d="M1961 1594 A82 82 0 0 1 1961 1692" fill="none" stroke="#fff" stroke-width="7.5" stroke-linecap="round"/><path d="M1991 1575 A102 102 0 0 1 1991 1711" fill="none" stroke="#fff" stroke-width="7.5" stroke-linecap="round"/><rect x="1760" y="1810.7" width="322" height="15" fill="rgba(200,200,200,0.12)"/><rect x="1762.00" y="1812" width="17.9" height="12" fill="#ffffff" opacity="0.92"/><rect x="1782.03" y="1812" width="17.9" height="12" fill="#ffffff" opacity="0.92"/><rect x="1802.06" y="1812" width="17.9" height="12" fill="#ffffff" opacity="0.92"/><rect x="1822.09" y="1812" width="17.9" height="12" fill="#ffffff" opacity="0.92"/><rect x="1842.12" y="1812" width="17.9" height="12" fill="#ffffff" opacity="0.92"/><rect x="1862.15" y="1812" width="17.9" height="12" fill="#ffffff" opacity="0.92"/><rect x="1882.18" y="1812" width="17.9" height="12" fill="#ffffff" opacity="0.92"/><rect x="1902.21" y="1812" width="17.9" height="12" fill="#ffffff" opacity="0.92"/><rect x="1922.24" y="1812" width="17.9" height="12" fill="#ffffff" opacity="0.92"/><rect x="1942.27" y="1812" width="17.9" height="12" fill="#ffffff" opacity="0.92"/><rect x="1962.30" y="1812" width="17.9" height="12" fill="#ffffff" opacity="0.92"/><rect x="1982.33" y="1812" width="17.9" height="12" fill="#ffffff" opacity="0.92"/><rect x="2002.36" y="1812" width="17.9" height="12" fill="#ffffff" opacity="0.92"/><rect x="2022.39" y="1812" width="17.9" height="12" fill="#ffffff" opacity="0.92"/></svg>
</body></html>
